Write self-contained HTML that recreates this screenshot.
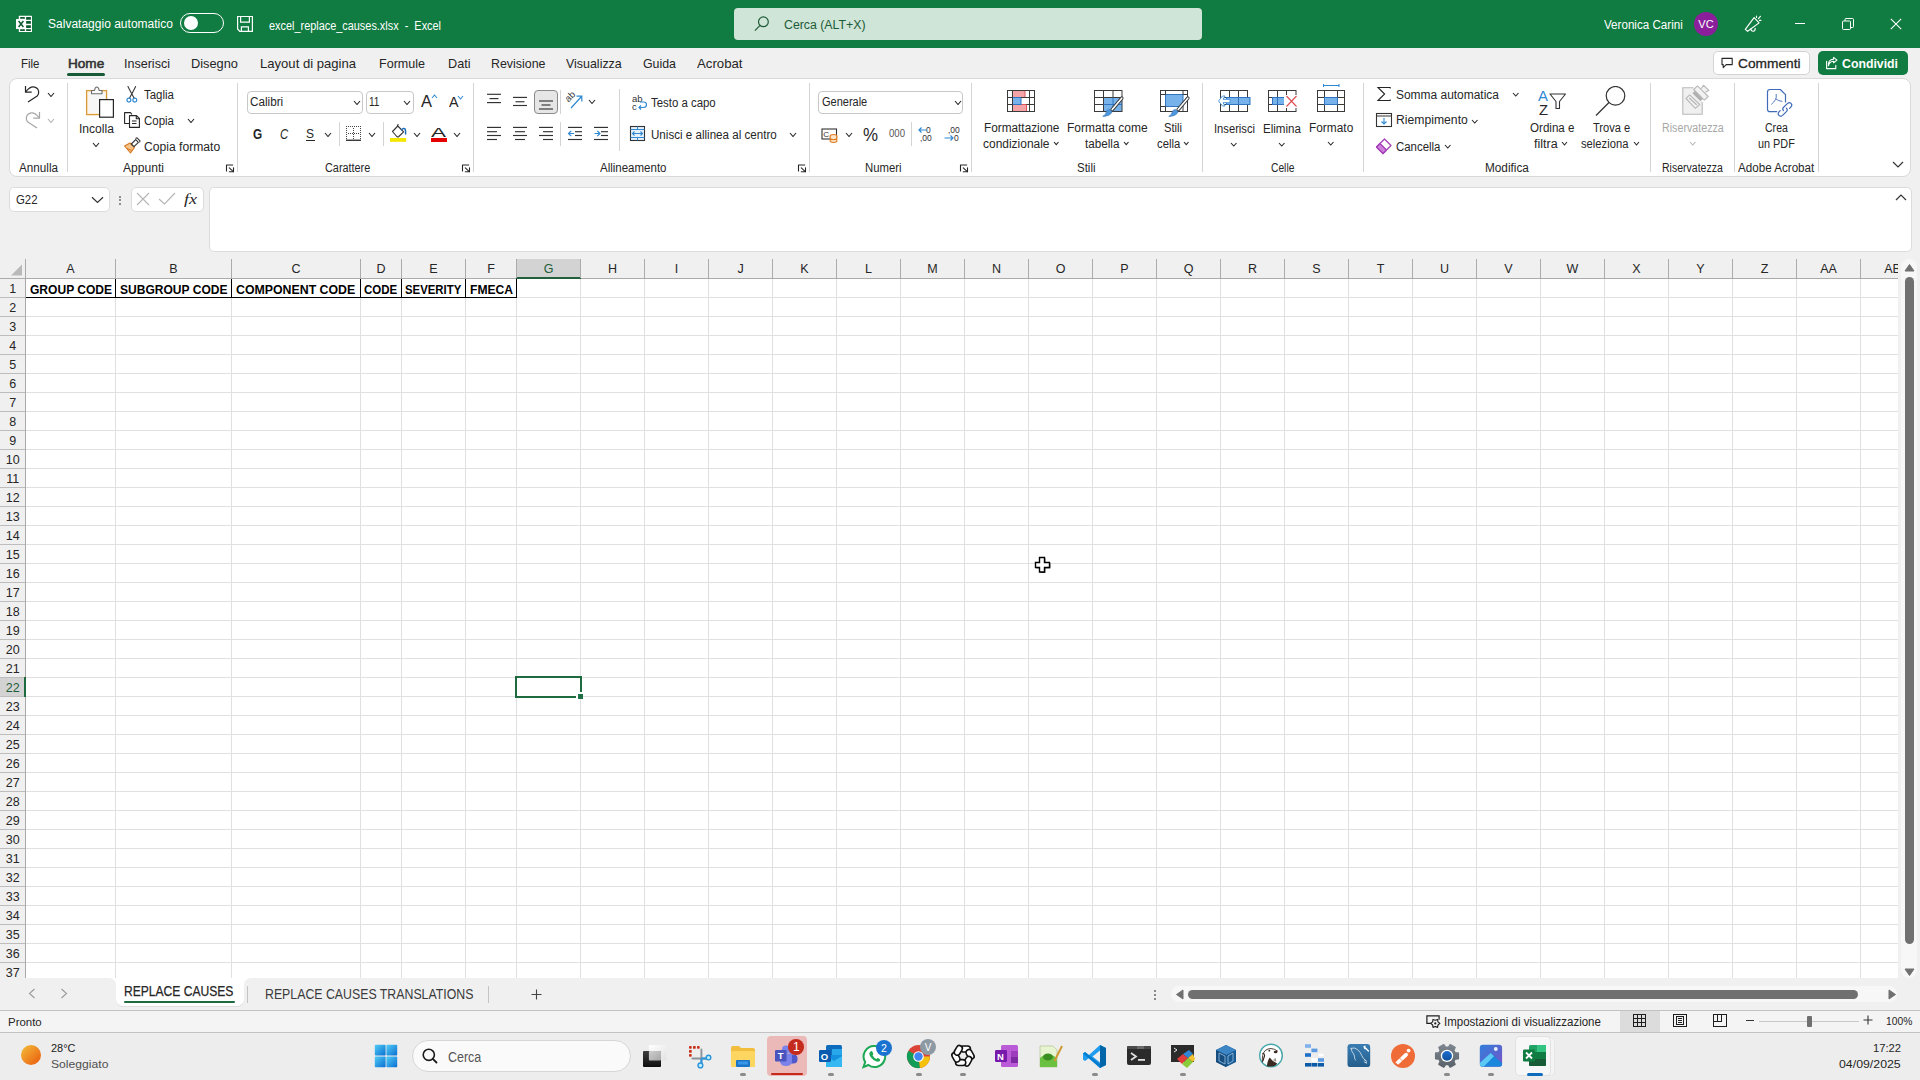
<!DOCTYPE html><html><head><meta charset="utf-8"><title>Excel</title><style>*{margin:0;padding:0}
html,body{width:1920px;height:1080px;overflow:hidden;background:#f0f0f0;font-family:"Liberation Sans",sans-serif}
.r{position:absolute;display:block}
.t{position:absolute;white-space:pre;line-height:1;transform-origin:0 0}
</style></head><body><div class="r" style="left:0px;top:0px;width:1920px;height:48px;background:#107C41;"></div><svg class="r" style="left:14px;top:14px" width="20" height="20" viewBox="14 14 20 20"><rect x="18.8" y="15.8" width="13.2" height="16.2" rx="0.6" fill="#fff"/>
      <rect x="16" y="18.9" width="9.6" height="10.1" rx="0.5" fill="#fff"/>
      <g fill="#0d5a2e"><rect x="20.1" y="17.1" width="4.8" height="1.7" rx="0.3"/><rect x="20.1" y="29.2" width="4.8" height="1.7" rx="0.3"/>
      <rect x="26.1" y="17.1" width="4.8" height="2.7" rx="0.3"/><rect x="26.1" y="21.1" width="4.8" height="2.7" rx="0.3"/><rect x="26.1" y="25.2" width="4.8" height="2.7" rx="0.3"/><rect x="26.1" y="29.2" width="4.8" height="1.7" rx="0.3"/></g>
      <path d="M18.6 21 L23.4 27 M23.4 21 L18.6 27" stroke="#0d5a2e" stroke-width="1.5"/></svg><span class="t" style="left:48.00px;top:18.02px;font-size:12.5px;color:#fff;transform:scaleX(0.9619);">Salvataggio automatico</span><div class="r" style="left:180px;top:13px;width:43.5px;height:19.5px;background:transparent;border:1.2px solid #fff;border-radius:10px;box-sizing:border-box;"></div><div class="r" style="left:184px;top:16px;width:14px;height:14px;background:#fff;border-radius:50%;"></div><svg class="r" style="left:235px;top:14px" width="20" height="20" viewBox="235 14 20 20"><g fill="none" stroke="#fff" stroke-width="1.2" stroke-linejoin="miter">
      <path d="M237.6 16.5 H252.4 V31.4 H239.8 L237.6 29 Z"/>
      <path d="M240.6 16.5 V22.2 H249.4 V16.5"/>
      <path d="M241.4 31.4 V26.8 H248.4 V31.4"/></g></svg><span class="t" style="left:269.40px;top:19.70px;font-size:12px;color:#fff;transform:scaleX(0.9081);">excel_replace_causes.xlsx  -  Excel</span><div class="r" style="left:734px;top:8px;width:468px;height:32px;background:#cfe5d7;border-radius:4px;"></div><svg class="r" style="left:754px;top:16px;" width="16" height="16" viewBox="0 0 16 16"><g fill="none" stroke="#1e5b37" stroke-width="1.2"><circle cx="9.4" cy="5.8" r="4.9"/><line x1="5.8" y1="9.6" x2="0.9" y2="14.6"/></g></svg><span class="t" style="left:783.75px;top:19.30px;font-size:12px;color:#1e5b37;transform:scaleX(1.0258);">Cerca (ALT+X)</span><span class="t" style="left:1604.00px;top:19.17px;font-size:12.5px;color:#fff;transform:scaleX(0.9298);">Veronica Carini</span><div class="r" style="left:1694px;top:11.5px;width:24px;height:24px;background:#8a1e9b;border-radius:50%;"></div><span class="t" style="left:1698.35px;top:19.15px;font-size:11px;color:#fff;">VC</span><svg class="r" style="left:1742px;top:13px" width="22" height="22" viewBox="1742 13 22 22"><g fill="none" stroke="#fff" stroke-width="1.15" stroke-linejoin="round" stroke-linecap="round">
      <path d="M1745.3 29.4 L1754.1 17.6 L1759.1 22.9 L1747.6 31.3 Z"/>
      <path d="M1750.9 28.8 Q1750.9 31.3 1753.3 31.2 Q1755.3 31 1755.2 28.3"/>
      <path d="M1756.5 16.1 V17.4 M1758.4 18.6 L1760.4 16.3 M1759.5 20.4 H1760.9"/></g></svg><div class="r" style="left:1795px;top:23px;width:10px;height:1px;background:#fff;"></div><svg class="r" style="left:1842px;top:18px;" width="12" height="12" viewBox="0 0 12 12"><g fill="none" stroke="#fff" stroke-width="1"><rect x="0.5" y="3" width="8" height="8.5" rx="1"/><path d="M3 3 V1.5 Q3 0.5 4 0.5 H10.5 Q11.5 0.5 11.5 1.5 V8.5 Q11.5 9.5 10.5 9.5 H8.5"/></g></svg><svg class="r" style="left:1890px;top:18px;" width="12" height="12" viewBox="0 0 12 12"><path d="M0.8 0.8 L11.2 11.2 M11.2 0.8 L0.8 11.2" stroke="#fff" stroke-width="1.1"/></svg><div class="r" style="left:0px;top:48px;width:1920px;height:211px;background:#f0f0f0;"></div><span class="t" style="left:21.00px;top:57.15px;font-size:13px;color:#262626;transform:scaleX(0.8831);">File</span><span class="t" style="left:67.50px;top:57.15px;font-size:13px;color:#333;transform:scaleX(1.0447);-webkit-text-stroke:0.55px #333;">Home</span><span class="t" style="left:124.00px;top:57.15px;font-size:13px;color:#262626;transform:scaleX(0.9644);">Inserisci</span><span class="t" style="left:190.50px;top:57.15px;font-size:13px;color:#262626;transform:scaleX(0.9853);">Disegno</span><span class="t" style="left:260.00px;top:57.15px;font-size:13px;color:#262626;transform:scaleX(1.0058);">Layout di pagina</span><span class="t" style="left:379.00px;top:57.15px;font-size:13px;color:#262626;transform:scaleX(0.9644);">Formule</span><span class="t" style="left:447.50px;top:57.15px;font-size:13px;color:#262626;transform:scaleX(0.9740);">Dati</span><span class="t" style="left:491.00px;top:57.15px;font-size:13px;color:#262626;transform:scaleX(0.9545);">Revisione</span><span class="t" style="left:566.00px;top:57.15px;font-size:13px;color:#262626;transform:scaleX(0.9563);">Visualizza</span><span class="t" style="left:642.50px;top:57.15px;font-size:13px;color:#262626;transform:scaleX(0.9510);">Guida</span><span class="t" style="left:697.00px;top:57.15px;font-size:13px;color:#262626;transform:scaleX(1.0156);">Acrobat</span><div class="r" style="left:67px;top:73px;width:38px;height:2.5px;background:#185c37;border-radius:1.5px;"></div><div class="r" style="left:1713px;top:51px;width:97px;height:24px;background:#fff;border:1px solid #d4d4d4;border-radius:5px;box-sizing:border-box;"></div><svg class="r" style="left:1719px;top:55px" width="16" height="15" viewBox="1719 55 16 15"><path d="M1722 58.4 H1732.2 V64.6 H1726.2 L1723.2 67.6 V64.6 H1722 Z" fill="none" stroke="#262626" stroke-width="1.1" stroke-linejoin="round"/></svg><span class="t" style="left:1737.50px;top:57.42px;font-size:13.5px;color:#262626;transform:scaleX(1.0163);-webkit-text-stroke:0.3px #262626;">Commenti</span><div class="r" style="left:1818px;top:51px;width:90px;height:24px;background:#107C41;border-radius:5px;"></div><svg class="r" style="left:1824px;top:55px" width="16" height="16" viewBox="1824 55 16 16"><g fill="none" stroke="#fff" stroke-width="1.1" stroke-linejoin="round" stroke-linecap="round">
      <path d="M1826.6 61.2 V68.6 H1835.8 V65.4"/>
      <path d="M1828.4 65.8 Q1829.2 61.4 1833.6 61.2 V62.8 L1837 60.1 L1833.6 57.4 V59.1 Q1827.8 59.6 1828.4 65.8 Z"/></g></svg><span class="t" style="left:1842.00px;top:57.42px;font-size:13.5px;color:#fff;font-weight:bold;transform:scaleX(0.9106);">Condividi</span><div class="r" style="left:9px;top:78px;width:1902px;height:99px;background:#ffffff;border:1px solid #d9d9d9;border-radius:8px;box-sizing:border-box;"></div><div class="r" style="left:67px;top:83px;width:1px;height:89px;background:#d4d4d4;"></div><div class="r" style="left:237px;top:83px;width:1px;height:89px;background:#d4d4d4;"></div><div class="r" style="left:473px;top:83px;width:1px;height:89px;background:#d4d4d4;"></div><div class="r" style="left:971px;top:83px;width:1px;height:89px;background:#d4d4d4;"></div><div class="r" style="left:1202px;top:83px;width:1px;height:89px;background:#d4d4d4;"></div><div class="r" style="left:1363px;top:83px;width:1px;height:89px;background:#d4d4d4;"></div><div class="r" style="left:1650px;top:83px;width:1px;height:89px;background:#d4d4d4;"></div><div class="r" style="left:1734px;top:83px;width:1px;height:89px;background:#d4d4d4;"></div><div class="r" style="left:1818px;top:83px;width:1px;height:89px;background:#d4d4d4;"></div><svg class="r" style="left:24px;top:84px;" width="18" height="20" viewBox="0 0 18 20"><g fill="none" stroke="#262626" stroke-width="1.2" stroke-linejoin="round"><path d="M1.5 2 V8.2 H7.7"/><path d="M1.8 7.8 C5 3.5 9 2.2 12 3.6 C15.2 5.2 15.5 9.5 13.2 12 L4 18"/></g></svg><svg class="r" style="left:46.5px;top:91.5px;" width="8" height="5.5" viewBox="0 0 8 5.5"><path d="M1 1 L4.0 4.5 L7 1" fill="none" stroke="#262626" stroke-width="1.1"/></svg><svg class="r" style="left:24px;top:110px;" width="18" height="20" viewBox="0 0 18 20"><g fill="none" stroke="#a6a6a6" stroke-width="1.2" stroke-linejoin="round"><path d="M15.5 2 V8.2 H9.3"/><path d="M15.2 7.8 C12 3.5 8 2.2 5 3.6 C1.8 5.2 1.5 9.5 3.8 12 L13 18"/></g></svg><svg class="r" style="left:46.5px;top:117.5px;" width="8" height="5.5" viewBox="0 0 8 5.5"><path d="M1 1 L4.0 4.5 L7 1" fill="none" stroke="#b0b0b0" stroke-width="1.1"/></svg><span class="t" style="left:19.00px;top:162.10px;font-size:12px;color:#262626;transform:scaleX(0.9738);">Annulla</span><svg class="r" style="left:85px;top:86px;" width="30" height="32" viewBox="0 0 30 32">
      <rect x="1.6" y="4.6" width="20" height="24" fill="#fdf3e0" stroke="#d99a3a" stroke-width="1.3"/>
      <rect x="3.4" y="6.4" width="16.4" height="20.4" fill="#f7f7f7" stroke="none"/>
      <path d="M6.5 7.8 V4.5 H9.5 Q10 1 11.8 1 Q13.6 1 14.2 4.5 H17 V7.8 Z" fill="#fafafa" stroke="#6e6e6e" stroke-width="1.1" stroke-linejoin="round"/>
      <rect x="14.6" y="13.6" width="13.8" height="17.6" fill="#fff" stroke="#262626" stroke-width="1.2"/>
    </svg><span class="t" style="left:79.00px;top:123.28px;font-size:12.5px;color:#262626;transform:scaleX(0.9669);">Incolla</span><svg class="r" style="left:92px;top:141.5px;" width="8" height="5.5" viewBox="0 0 8 5.5"><path d="M1 1 L4.0 4.5 L7 1" fill="none" stroke="#262626" stroke-width="1.1"/></svg><svg class="r" style="left:125px;top:84px" width="14" height="19" viewBox="125 84 14 19"><g fill="none" stroke-linecap="round">
      <path d="M128 86.6 Q130 91 134.2 98.2 M135.6 86.6 Q133.6 91 129.4 98.2" stroke="#3a3a3a" stroke-width="1.1"/>
      <circle cx="128.9" cy="100.1" r="1.95" stroke="#2f8ad3" stroke-width="1.15"/><circle cx="134.8" cy="100.1" r="1.95" stroke="#2f8ad3" stroke-width="1.15"/></g></svg><span class="t" style="left:144.40px;top:88.88px;font-size:12.5px;color:#262626;transform:scaleX(0.9174);">Taglia</span><svg class="r" style="left:123px;top:111px;" width="19" height="18" viewBox="0 0 19 18"><g fill="none" stroke="#262626" stroke-width="1.1" stroke-linejoin="round">
      <path d="M6 12.5 H1.6 V1.6 H7.5 L9 3.5"/>
      <path d="M6.5 4.6 H13.5 L16.4 7.5 V16.4 H6.5 Z"/>
      <path d="M13.3 4.6 V7.7 H16.4"/>
      <path d="M9 10 H13.5 M9 12.5 H13.5"/></g></svg><span class="t" style="left:144.40px;top:115.28px;font-size:12.5px;color:#262626;transform:scaleX(0.9174);">Copia</span><svg class="r" style="left:186.5px;top:117.5px;" width="8" height="5.5" viewBox="0 0 8 5.5"><path d="M1 1 L4.0 4.5 L7 1" fill="none" stroke="#262626" stroke-width="1.1"/></svg><svg class="r" style="left:123px;top:137px;" width="18" height="18" viewBox="0 0 18 18"><g stroke-linejoin="round">
      <path d="M1.5 9 L7.5 15.8 L11.5 10.5 L7 6 Z" fill="#f3c48a" stroke="#d97a22" stroke-width="1.1"/>
      <path d="M4 11.6 L9.3 13.5" stroke="#d97a22" stroke-width="1"/>
      <path d="M8.3 7 L12.7 2.6 L15.4 5.3 L11 9.7 Z" fill="#fff" stroke="#333" stroke-width="1.1"/>
      <path d="M12.5 1.5 L14 0.8 L17 3.8 L16.5 5.4" fill="none" stroke="#333" stroke-width="1.1"/></g></svg><span class="t" style="left:144.40px;top:140.94px;font-size:12.3px;color:#262626;transform:scaleX(0.9864);">Copia formato</span><span class="t" style="left:123.00px;top:162.10px;font-size:12px;color:#262626;transform:scaleX(1.0074);">Appunti</span><svg class="r" style="left:225px;top:163.5px;" width="11" height="10" viewBox="0 0 11 10"><g fill="none" stroke="#262626" stroke-width="1.1" stroke-linecap="round" stroke-linejoin="round"><path d="M1.5 6.9 V1 H7.7"/><path d="M4.3 3.9 L8.3 7.7"/><path d="M8.5 3.8 V7.8 H4.3"/></g></svg><div class="r" style="left:246.5px;top:90.5px;width:116px;height:23px;background:#fff;border:1px solid #c8c8c8;border-radius:4px;box-sizing:border-box;"></div><span class="t" style="left:249.75px;top:96.28px;font-size:12.5px;color:#262626;transform:scaleX(0.9365);">Calibri</span><svg class="r" style="left:352.5px;top:99.5px;" width="8" height="5.5" viewBox="0 0 8 5.5"><path d="M1 1 L4.0 4.5 L7 1" fill="none" stroke="#262626" stroke-width="1.1"/></svg><div class="r" style="left:365.5px;top:90.5px;width:48px;height:23px;background:#fff;border:1px solid #c8c8c8;border-radius:4px;box-sizing:border-box;"></div><span class="t" style="left:368.50px;top:96.28px;font-size:12.5px;color:#262626;transform:scaleX(0.8077);">11</span><svg class="r" style="left:403px;top:99.5px;" width="8" height="5.5" viewBox="0 0 8 5.5"><path d="M1 1 L4.0 4.5 L7 1" fill="none" stroke="#262626" stroke-width="1.1"/></svg><span class="t" style="left:421.00px;top:93.25px;font-size:17px;color:#262626;transform:scaleX(0.9692);">A</span><svg class="r" style="left:431px;top:94px;" width="7" height="5" viewBox="0 0 7 5"><path d="M1 4 L3.5 1 L6 4" fill="none" stroke="#2f8ad3" stroke-width="1.1"/></svg><span class="t" style="left:448.50px;top:95.38px;font-size:14.5px;color:#262626;transform:scaleX(0.9845);">A</span><svg class="r" style="left:457px;top:94.5px;" width="7" height="5" viewBox="0 0 7 5"><path d="M1 1 L3.5 4 L6 1" fill="none" stroke="#2f8ad3" stroke-width="1.1"/></svg><span class="t" style="left:253.00px;top:127.00px;font-size:14px;color:#262626;font-weight:bold;transform:scaleX(0.8440);">G</span><span class="t" style="left:280.00px;top:127.00px;font-size:14px;color:#262626;transform:scaleX(0.8119);font-style:italic;">C</span><span class="t" style="left:306.00px;top:127.43px;font-size:13.5px;color:#262626;transform:scaleX(0.8889);">S</span><div class="r" style="left:306px;top:139.5px;width:8.5px;height:1.2px;background:#262626;"></div><svg class="r" style="left:324px;top:131.5px;" width="8" height="5.5" viewBox="0 0 8 5.5"><path d="M1 1 L4.0 4.5 L7 1" fill="none" stroke="#262626" stroke-width="1.1"/></svg><div class="r" style="left:339px;top:122px;width:1px;height:24px;background:#d4d4d4;"></div><svg class="r" style="left:344px;top:124px" width="20" height="20" viewBox="344 124 20 20"><rect x="346" y="126" width="1" height="1" fill="#444"/><rect x="348" y="126" width="1" height="1" fill="#444"/><rect x="350" y="126" width="1" height="1" fill="#444"/><rect x="352" y="126" width="1" height="1" fill="#444"/><rect x="354" y="126" width="1" height="1" fill="#444"/><rect x="356" y="126" width="1" height="1" fill="#444"/><rect x="358" y="126" width="1" height="1" fill="#444"/><rect x="360" y="126" width="1" height="1" fill="#444"/><rect x="346" y="128" width="1" height="1" fill="#444"/><rect x="346" y="130" width="1" height="1" fill="#444"/><rect x="346" y="132" width="1" height="1" fill="#444"/><rect x="346" y="134" width="1" height="1" fill="#444"/><rect x="346" y="136" width="1" height="1" fill="#444"/><rect x="346" y="138" width="1" height="1" fill="#444"/><rect x="360" y="128" width="1" height="1" fill="#444"/><rect x="360" y="130" width="1" height="1" fill="#444"/><rect x="360" y="132" width="1" height="1" fill="#444"/><rect x="360" y="134" width="1" height="1" fill="#444"/><rect x="360" y="136" width="1" height="1" fill="#444"/><rect x="360" y="138" width="1" height="1" fill="#444"/><rect x="348" y="133" width="1" height="1" fill="#444"/><rect x="350" y="133" width="1" height="1" fill="#444"/><rect x="352" y="133" width="1" height="1" fill="#444"/><rect x="354" y="133" width="1" height="1" fill="#444"/><rect x="356" y="133" width="1" height="1" fill="#444"/><rect x="358" y="133" width="1" height="1" fill="#444"/><rect x="353" y="128" width="1" height="1" fill="#444"/><rect x="353" y="130" width="1" height="1" fill="#444"/><rect x="353" y="132" width="1" height="1" fill="#444"/><rect x="353" y="134" width="1" height="1" fill="#444"/><rect x="353" y="136" width="1" height="1" fill="#444"/><rect x="353" y="138" width="1" height="1" fill="#444"/><rect x="346" y="139.6" width="15" height="1.3" fill="#262626"/></svg><svg class="r" style="left:368px;top:131.5px;" width="8" height="5.5" viewBox="0 0 8 5.5"><path d="M1 1 L4.0 4.5 L7 1" fill="none" stroke="#262626" stroke-width="1.1"/></svg><div class="r" style="left:383px;top:122px;width:1px;height:24px;background:#d4d4d4;"></div><svg class="r" style="left:388px;top:124px" width="20" height="20" viewBox="388 124 20 20"><path d="M392.5 131.5 L397.8 126 L403.6 131.8 L398.8 136.5 Q397.8 137.4 396.8 136.5 Z" fill="#fff" stroke="#333" stroke-width="1.1" stroke-linejoin="round"/>
      <path d="M397.8 126 Q397 124.6 398.6 124.6" fill="none" stroke="#333" stroke-width="1.1"/>
      <path d="M401.5 129.8 Q403.8 127.4 405.2 129.2 Q405.8 131 405.6 134" fill="none" stroke="#1f6fb8" stroke-width="1.5" stroke-linecap="round"/>
      <rect x="390" y="138" width="16.2" height="3.8" fill="#f5e600"/></svg><svg class="r" style="left:412.5px;top:131.5px;" width="8" height="5.5" viewBox="0 0 8 5.5"><path d="M1 1 L4.0 4.5 L7 1" fill="none" stroke="#262626" stroke-width="1.1"/></svg><span class="t" style="left:431.00px;top:126.23px;font-size:13.5px;color:#262626;transform:scaleX(1.6667);">A</span><div class="r" style="left:431px;top:138px;width:16px;height:3.8px;background:#e40000;"></div><svg class="r" style="left:453px;top:131.5px;" width="8" height="5.5" viewBox="0 0 8 5.5"><path d="M1 1 L4.0 4.5 L7 1" fill="none" stroke="#262626" stroke-width="1.1"/></svg><span class="t" style="left:324.75px;top:162.10px;font-size:12px;color:#262626;transform:scaleX(0.9050);">Carattere</span><svg class="r" style="left:461px;top:163.5px;" width="11" height="10" viewBox="0 0 11 10"><g fill="none" stroke="#262626" stroke-width="1.1" stroke-linecap="round" stroke-linejoin="round"><path d="M1.5 6.9 V1 H7.7"/><path d="M4.3 3.9 L8.3 7.7"/><path d="M8.5 3.8 V7.8 H4.3"/></g></svg><svg class="r" style="left:486px;top:92px;" width="16" height="14" viewBox="0 0 16 14"><line x1="1" y1="2.3" x2="15" y2="2.3" stroke="#333" stroke-width="1.15"/><line x1="3.5" y1="6.6" x2="12.5" y2="6.6" stroke="#333" stroke-width="1.15"/><line x1="1" y1="10.6" x2="15" y2="10.6" stroke="#333" stroke-width="1.15"/></svg><svg class="r" style="left:512px;top:95px;" width="16" height="14" viewBox="0 0 16 14"><line x1="1" y1="2.4" x2="15" y2="2.4" stroke="#333" stroke-width="1.15"/><line x1="3.5" y1="6.75" x2="12.5" y2="6.75" stroke="#333" stroke-width="1.15"/><line x1="1" y1="10.5" x2="15" y2="10.5" stroke="#333" stroke-width="1.15"/></svg><div class="r" style="left:534px;top:90px;width:23.5px;height:23.5px;background:#e6e6e6;border:1px solid #8a8a8a;border-radius:4px;box-sizing:border-box;"></div><svg class="r" style="left:538px;top:99px;" width="16" height="14" viewBox="0 0 16 14"><line x1="1" y1="2" x2="15" y2="2" stroke="#333" stroke-width="1.15"/><line x1="3.5" y1="6" x2="12.5" y2="6" stroke="#333" stroke-width="1.15"/><line x1="1" y1="10" x2="15" y2="10" stroke="#333" stroke-width="1.15"/></svg><div class="r" style="left:560px;top:90px;width:1px;height:24px;background:#d4d4d4;"></div><svg class="r" style="left:566px;top:92px;" width="20" height="18" viewBox="0 0 20 18"><text x="0" y="0" font-family="Liberation Sans" font-size="9.5" fill="#333" transform="translate(2.5,10.5) rotate(-45)">ab</text>
      <path d="M5 16 L15.5 4.5 M10.5 4.2 H15.8 V9.5" fill="none" stroke="#2f8ad3" stroke-width="1.2"/></svg><svg class="r" style="left:588px;top:99px;" width="8" height="5.5" viewBox="0 0 8 5.5"><path d="M1 1 L4.0 4.5 L7 1" fill="none" stroke="#262626" stroke-width="1.1"/></svg><svg class="r" style="left:486px;top:125px;" width="16" height="16" viewBox="0 0 16 16"><line x1="1" y1="2.4" x2="15" y2="2.4" stroke="#333" stroke-width="1.15"/><line x1="1" y1="6.7" x2="11" y2="6.7" stroke="#333" stroke-width="1.15"/><line x1="1" y1="10.5" x2="15" y2="10.5" stroke="#333" stroke-width="1.15"/><line x1="1" y1="14.5" x2="11" y2="14.5" stroke="#333" stroke-width="1.15"/></svg><svg class="r" style="left:512px;top:125px;" width="16" height="16" viewBox="0 0 16 16"><line x1="1" y1="2.4" x2="15" y2="2.4" stroke="#333" stroke-width="1.15"/><line x1="3" y1="6.7" x2="13" y2="6.7" stroke="#333" stroke-width="1.15"/><line x1="1" y1="10.5" x2="15" y2="10.5" stroke="#333" stroke-width="1.15"/><line x1="3" y1="14.5" x2="13" y2="14.5" stroke="#333" stroke-width="1.15"/></svg><svg class="r" style="left:538px;top:125px;" width="16" height="16" viewBox="0 0 16 16"><line x1="1" y1="2.4" x2="15" y2="2.4" stroke="#333" stroke-width="1.15"/><line x1="5" y1="6.7" x2="15" y2="6.7" stroke="#333" stroke-width="1.15"/><line x1="1" y1="10.5" x2="15" y2="10.5" stroke="#333" stroke-width="1.15"/><line x1="5" y1="14.5" x2="15" y2="14.5" stroke="#333" stroke-width="1.15"/></svg><div class="r" style="left:560px;top:122px;width:1px;height:24px;background:#d4d4d4;"></div><svg class="r" style="left:567px;top:125px;" width="16" height="16" viewBox="0 0 16 16"><line x1="1" y1="2.4" x2="15" y2="2.4" stroke="#333" stroke-width="1.15"/><line x1="8" y1="6.7" x2="15" y2="6.7" stroke="#333" stroke-width="1.15"/><line x1="8" y1="10.5" x2="15" y2="10.5" stroke="#333" stroke-width="1.15"/><line x1="1" y1="14.5" x2="15" y2="14.5" stroke="#333" stroke-width="1.15"/><path d="M7 8.5 H1.5 M4.2 5.8 L1.5 8.5 L4.2 11.2" fill="none" stroke="#2f8ad3" stroke-width="1.2"/></svg><svg class="r" style="left:593px;top:125px;" width="16" height="16" viewBox="0 0 16 16"><line x1="1" y1="2.4" x2="15" y2="2.4" stroke="#333" stroke-width="1.15"/><line x1="8" y1="6.7" x2="15" y2="6.7" stroke="#333" stroke-width="1.15"/><line x1="8" y1="10.5" x2="15" y2="10.5" stroke="#333" stroke-width="1.15"/><line x1="1" y1="14.5" x2="15" y2="14.5" stroke="#333" stroke-width="1.15"/><path d="M1.5 8.5 H7 M4.3 5.8 L7 8.5 L4.3 11.2" fill="none" stroke="#2f8ad3" stroke-width="1.2"/></svg><div class="r" style="left:619px;top:89px;width:1px;height:62px;background:#d4d4d4;"></div><svg class="r" style="left:631px;top:94px;" width="17" height="18" viewBox="0 0 17 18"><text x="1" y="8" font-family="Liberation Sans" font-size="9.5" fill="#333">ab</text>
      <text x="1" y="16" font-family="Liberation Sans" font-size="9.5" fill="#333">c</text>
      <path d="M8 13.5 H12.5 Q15.5 13.5 15.5 10.5 Q15.5 8 12.5 8 H9 M10 11.5 L8 13.5 L10 15.5" fill="none" stroke="#2f8ad3" stroke-width="1.2"/></svg><span class="t" style="left:650.75px;top:97.28px;font-size:12.5px;color:#262626;transform:scaleX(0.9126);">Testo a capo</span><svg class="r" style="left:629px;top:125px;" width="17" height="17" viewBox="0 0 17 17"><rect x="1.5" y="1.5" width="14" height="14" fill="#e6f1fb" stroke="#333" stroke-width="1.1"/>
      <path d="M1.5 4.5 H15.5 M1.5 12.5 H15.5 M8.5 1.5 V4.5 M8.5 12.5 V15.5" stroke="#2f8ad3" stroke-width="1"/>
      <path d="M3.5 8.5 H13.5 M5.5 6.5 L3.5 8.5 L5.5 10.5 M11.5 6.5 L13.5 8.5 L11.5 10.5" fill="none" stroke="#2f8ad3" stroke-width="1.1"/></svg><span class="t" style="left:650.75px;top:129.28px;font-size:12.5px;color:#262626;transform:scaleX(0.9277);">Unisci e allinea al centro</span><svg class="r" style="left:788.7px;top:131.5px;" width="8" height="5.5" viewBox="0 0 8 5.5"><path d="M1 1 L4.0 4.5 L7 1" fill="none" stroke="#262626" stroke-width="1.1"/></svg><span class="t" style="left:599.50px;top:162.10px;font-size:12px;color:#262626;transform:scaleX(0.9582);">Allineamento</span><svg class="r" style="left:797px;top:163.5px;" width="11" height="10" viewBox="0 0 11 10"><g fill="none" stroke="#262626" stroke-width="1.1" stroke-linecap="round" stroke-linejoin="round"><path d="M1.5 6.9 V1 H7.7"/><path d="M4.3 3.9 L8.3 7.7"/><path d="M8.5 3.8 V7.8 H4.3"/></g></svg><div class="r" style="left:809px;top:83px;width:1px;height:89px;background:#d4d4d4;"></div><div class="r" style="left:818px;top:90.5px;width:145px;height:23px;background:#fff;border:1px solid #c8c8c8;border-radius:4px;box-sizing:border-box;"></div><span class="t" style="left:821.80px;top:95.98px;font-size:12.5px;color:#262626;transform:scaleX(0.8794);">Generale</span><svg class="r" style="left:953.5px;top:99.5px;" width="8" height="5.5" viewBox="0 0 8 5.5"><path d="M1 1 L4.0 4.5 L7 1" fill="none" stroke="#262626" stroke-width="1.1"/></svg><svg class="r" style="left:821px;top:128px;" width="19" height="16" viewBox="0 0 19 16"><rect x="1" y="1" width="14.5" height="10" fill="#fff" stroke="#333" stroke-width="1.1"/>
      <text x="2.2" y="9" font-family="Liberation Sans" font-size="8" fill="#333">C</text>
      <ellipse cx="12.5" cy="8" rx="3.3" ry="1.4" fill="#fff" stroke="#e07a1c" stroke-width="1.1"/>
      <path d="M9.2 8 V13.5 Q12.5 15.5 15.8 13.5 V8 M9.2 10.8 Q12.5 12.6 15.8 10.8" fill="#fde5c9" stroke="#e07a1c" stroke-width="1.1"/></svg><svg class="r" style="left:844.5px;top:131.5px;" width="8" height="5.5" viewBox="0 0 8 5.5"><path d="M1 1 L4.0 4.5 L7 1" fill="none" stroke="#262626" stroke-width="1.1"/></svg><span class="t" style="left:863.30px;top:126.30px;font-size:18px;color:#262626;transform:scaleX(0.9375);">%</span><span class="t" style="left:889.00px;top:129.40px;font-size:10px;color:#555;transform:scaleX(0.9581);">000</span><div class="r" style="left:911px;top:122px;width:1px;height:24px;background:#d4d4d4;"></div><svg class="r" style="left:917px;top:125px;" width="18" height="18" viewBox="0 0 18 18"><text x="9" y="8" font-family="Liberation Sans" font-size="8.5" fill="#333">0</text>
      <text x="3" y="16" font-family="Liberation Sans" font-size="8.5" fill="#333">,00</text>
      <path d="M10 5 H2 M4.5 2.5 L2 5 L4.5 7.5" fill="none" stroke="#2f8ad3" stroke-width="1.2"/></svg><svg class="r" style="left:943px;top:125px;" width="18" height="18" viewBox="0 0 18 18"><text x="5" y="8" font-family="Liberation Sans" font-size="8.5" fill="#333">,00</text>
      <text x="11" y="16" font-family="Liberation Sans" font-size="8.5" fill="#333">0</text>
      <path d="M1.5 13 H10 M7.5 10.5 L10 13 L7.5 15.5" fill="none" stroke="#2f8ad3" stroke-width="1.2"/></svg><span class="t" style="left:864.50px;top:162.10px;font-size:12px;color:#262626;transform:scaleX(0.9444);">Numeri</span><svg class="r" style="left:959px;top:163.5px;" width="11" height="10" viewBox="0 0 11 10"><g fill="none" stroke="#262626" stroke-width="1.1" stroke-linecap="round" stroke-linejoin="round"><path d="M1.5 6.9 V1 H7.7"/><path d="M4.3 3.9 L8.3 7.7"/><path d="M8.5 3.8 V7.8 H4.3"/></g></svg><svg class="r" style="left:1004px;top:86px" width="34" height="30" viewBox="1004 86 34 30">
      <rect x="1012.5" y="90.5" width="12.5" height="7" fill="#f4a3a6" stroke="#e0565c" stroke-width="1"/>
      <rect x="1012.5" y="104.5" width="14" height="7" fill="#f4a3a6" stroke="#e0565c" stroke-width="1"/>
      <rect x="1012.5" y="97.5" width="8.5" height="7" fill="#77b3ea" stroke="#2f74c0" stroke-width="1"/>
      <g fill="none" stroke="#3a3a3a" stroke-width="1">
        <rect x="1007.5" y="90.5" width="27" height="21"/>
        <path d="M1012.5 90.5 V111.5 M1029.5 90.5 V111.5 M1007.5 97.5 H1012.5 M1007.5 104.5 H1012.5 M1026.5 104.5 H1034.5 M1025 97.5 H1034.5 M1021 97.5 H1025"/>
      </g></svg><span class="t" style="left:983.60px;top:122.28px;font-size:12.5px;color:#262626;transform:scaleX(0.9437);">Formattazione</span><span class="t" style="left:982.75px;top:137.78px;font-size:12.5px;color:#262626;transform:scaleX(0.9568);">condizionale</span><svg class="r" style="left:1052.6px;top:141.2px;" width="6.5" height="4.6" viewBox="0 0 6.5 4.6"><path d="M1 1 L3.25 3.6 L5.5 1" fill="none" stroke="#262626" stroke-width="1.1"/></svg><svg class="r" style="left:1092px;top:86px" width="34" height="33" viewBox="1092 86 34 33">
      <rect x="1103.5" y="97.5" width="18.5" height="14" fill="#77b3ea"/>
      <g fill="none" stroke="#3a3a3a" stroke-width="1">
        <rect x="1094.5" y="90.5" width="27.5" height="21"/>
        <path d="M1094.5 97.5 H1122 M1094.5 104.5 H1103.5 M1103.5 90.5 V111.5 M1113 90.5 V97.5"/>
      </g>
      <path d="M1103.5 104.5 H1122 M1113 97.5 V111.5" stroke="#2f74c0" stroke-width="1"/><path d="M1121.8 98.2 L1112.2 109.6" stroke="#3a3a3a" stroke-width="3.6" stroke-linecap="round"/>
      <path d="M1121.8 98.2 L1112.2 109.6" stroke="#fff" stroke-width="1.6" stroke-linecap="round"/>
      <path d="M1109.6 109.4 q1.6 1.2 2.4 2.6 q-1.8 4.2 -9.2 4.4 q3.6 -2 3.4 -4.4 q0.8 -2.6 3.4 -2.6 z" fill="#4f95da" stroke="#3479c2" stroke-width="0.7"/></svg><span class="t" style="left:1067.40px;top:122.28px;font-size:12.5px;color:#262626;transform:scaleX(0.9590);">Formatta come</span><span class="t" style="left:1085.00px;top:137.78px;font-size:12.5px;color:#262626;transform:scaleX(0.9350);">tabella</span><svg class="r" style="left:1123px;top:141.2px;" width="6.5" height="4.6" viewBox="0 0 6.5 4.6"><path d="M1 1 L3.25 3.6 L5.5 1" fill="none" stroke="#262626" stroke-width="1.1"/></svg><svg class="r" style="left:1158px;top:86px" width="34" height="33" viewBox="1158 86 34 33">
      <rect x="1165.5" y="94.5" width="17.5" height="12" fill="#77b3ea" stroke="#2f74c0" stroke-width="1"/>
      <g fill="none" stroke="#3a3a3a" stroke-width="1">
        <rect x="1160.5" y="90.5" width="27" height="21"/>
        <path d="M1165.5 90.5 V94.5 M1183 90.5 V94.5 M1160.5 94.5 H1165.5 M1183 94.5 H1187.5 M1160.5 106.5 H1165.5 M1165.5 106.5 V111.5 M1183 106.5 V111.5"/>
      </g><path d="M1187.8 98.2 L1178.2 109.6" stroke="#3a3a3a" stroke-width="3.6" stroke-linecap="round"/>
      <path d="M1187.8 98.2 L1178.2 109.6" stroke="#fff" stroke-width="1.6" stroke-linecap="round"/>
      <path d="M1175.6 109.4 q1.6 1.2 2.4 2.6 q-1.8 4.2 -9.2 4.4 q3.6 -2 3.4 -4.4 q0.8 -2.6 3.4 -2.6 z" fill="#4f95da" stroke="#3479c2" stroke-width="0.7"/></svg><span class="t" style="left:1164.00px;top:122.28px;font-size:12.5px;color:#262626;transform:scaleX(0.8933);">Stili</span><span class="t" style="left:1156.75px;top:137.78px;font-size:12.5px;color:#262626;transform:scaleX(0.9029);">cella</span><svg class="r" style="left:1182.6px;top:141.2px;" width="6.5" height="4.6" viewBox="0 0 6.5 4.6"><path d="M1 1 L3.25 3.6 L5.5 1" fill="none" stroke="#262626" stroke-width="1.1"/></svg><span class="t" style="left:1077.00px;top:162.10px;font-size:12px;color:#262626;transform:scaleX(0.9561);">Stili</span><svg class="r" style="left:1215px;top:86px" width="38" height="30" viewBox="1215 86 38 30">
      <g fill="none" stroke="#3a3a3a" stroke-width="1">
        <rect x="1220.5" y="90.5" width="27" height="21"/>
        <path d="M1229.5 90.5 V111.5 M1238.5 90.5 V111.5 M1220.5 97.5 H1247.5 M1220.5 104.5 H1247.5"/>
      </g>
      <rect x="1226.5" y="97.5" width="23.5" height="7" fill="#77b3ea" stroke="#2f74c0" stroke-width="1"/>
      <path d="M1238.5 97.5 V104.5" stroke="#2f74c0" stroke-width="1"/>
      <path d="M1230 99.3 H1223 L1225 96 L1222.5 96 L1218.5 101 L1222.5 106 L1225 106 L1223 102.7 H1230 Z" fill="#fff" stroke="#4f95da" stroke-width="1" stroke-linejoin="round"/></svg><span class="t" style="left:1213.50px;top:122.88px;font-size:12.5px;color:#262626;transform:scaleX(0.8942);">Inserisci</span><svg class="r" style="left:1229.6px;top:141.75px;" width="7.5" height="5" viewBox="0 0 7.5 5"><path d="M1 1 L3.75 4 L6.5 1" fill="none" stroke="#262626" stroke-width="1.1"/></svg><svg class="r" style="left:1265px;top:86px" width="36" height="30" viewBox="1265 86 36 30">
      <g fill="none" stroke="#3a3a3a" stroke-width="1">
        <rect x="1268.5" y="90.5" width="27.5" height="21"/>
        <path d="M1277.5 90.5 V111.5 M1286.5 90.5 V111.5 M1268.5 97.5 H1296 M1268.5 104.5 H1296"/>
      </g>
      <path d="M1272.5 97.5 H1284.5 L1288 101 L1284.5 104.5 H1272.5 Z" fill="#77b3ea" stroke="#2f74c0" stroke-width="1"/>
      <path d="M1277.5 97.5 V104.5" stroke="#2f74c0" stroke-width="1"/>
      <rect x="1284" y="95" width="14" height="13" fill="#fff"/>
      <path d="M1286.5 96 L1296.5 106.5 M1296.5 96 L1286.5 106.5" stroke="#e24b4f" stroke-width="1.1"/></svg><span class="t" style="left:1262.50px;top:122.88px;font-size:12.5px;color:#262626;transform:scaleX(0.9257);">Elimina</span><svg class="r" style="left:1277.75px;top:141.75px;" width="7.5" height="5" viewBox="0 0 7.5 5"><path d="M1 1 L3.75 4 L6.5 1" fill="none" stroke="#262626" stroke-width="1.1"/></svg><svg class="r" style="left:1314px;top:83px" width="34" height="31" viewBox="1314 83 34 31">
      <path d="M1323.5 85.5 H1339 M1323.5 84 V87 M1339 84 V87" stroke="#2f86d3" stroke-width="1"/>
      <rect x="1324.5" y="97.5" width="13" height="7" fill="#77b3ea"/>
      <g fill="none" stroke="#3a3a3a" stroke-width="1">
        <rect x="1317.5" y="90.5" width="27" height="21"/>
        <path d="M1324.5 90.5 V111.5 M1337.5 90.5 V111.5 M1317.5 97.5 H1344.5 M1317.5 104.5 H1344.5"/>
      </g>
      <rect x="1324.5" y="97.5" width="13" height="7" fill="none" stroke="#2f74c0" stroke-width="1"/></svg><span class="t" style="left:1308.50px;top:122.47px;font-size:12.5px;color:#262626;transform:scaleX(0.9506);">Formato</span><svg class="r" style="left:1326.5px;top:140.75px;" width="7.5" height="5" viewBox="0 0 7.5 5"><path d="M1 1 L3.75 4 L6.5 1" fill="none" stroke="#262626" stroke-width="1.1"/></svg><span class="t" style="left:1270.60px;top:162.10px;font-size:12px;color:#262626;transform:scaleX(0.8556);">Celle</span><svg class="r" style="left:1376px;top:86px" width="16" height="16" viewBox="1376 86 16 16"><path d="M1390.2 88.6 V87.5 H1378 L1384.6 94 L1378 100.5 H1390.2 V99.4" fill="none" stroke="#262626" stroke-width="1.1" stroke-linejoin="miter"/></svg><span class="t" style="left:1396.00px;top:88.88px;font-size:12.5px;color:#262626;transform:scaleX(0.9559);">Somma automatica</span><svg class="r" style="left:1511.8px;top:91.8px;" width="7.5" height="5" viewBox="0 0 7.5 5"><path d="M1 1 L3.75 4 L6.5 1" fill="none" stroke="#262626" stroke-width="1.1"/></svg><svg class="r" style="left:1375px;top:112px;" width="18" height="16" viewBox="0 0 18 16"><rect x="1.5" y="1.5" width="15" height="13" fill="#fff" stroke="#333" stroke-width="1.1"/>
      <line x1="1.5" y1="4" x2="16.5" y2="4" stroke="#333" stroke-width="1"/>
      <path d="M9 6 V12 M6.5 9.5 L9 12 L11.5 9.5" fill="none" stroke="#2f8ad3" stroke-width="1.1"/></svg><span class="t" style="left:1396.00px;top:114.28px;font-size:12.5px;color:#262626;transform:scaleX(0.9749);">Riempimento</span><svg class="r" style="left:1471px;top:118.5px;" width="7.5" height="5" viewBox="0 0 7.5 5"><path d="M1 1 L3.75 4 L6.5 1" fill="none" stroke="#262626" stroke-width="1.1"/></svg><svg class="r" style="left:1375px;top:137px;" width="18" height="18" viewBox="0 0 18 18"><path d="M1.5 10 L9.5 2 L16 8.5 L8 16.5 Z" fill="#fff" stroke="#a23bb5" stroke-width="1.2" stroke-linejoin="round"/>
      <path d="M1.5 10 L5 6.5 L11.5 13 L8 16.5 Z" fill="#cf7fdc" stroke="#a23bb5" stroke-width="1.2" stroke-linejoin="round"/></svg><span class="t" style="left:1396.00px;top:140.78px;font-size:12.5px;color:#262626;transform:scaleX(0.9138);">Cancella</span><svg class="r" style="left:1444px;top:144px;" width="7.5" height="5" viewBox="0 0 7.5 5"><path d="M1 1 L3.75 4 L6.5 1" fill="none" stroke="#262626" stroke-width="1.1"/></svg><span class="t" style="left:1537.80px;top:89.00px;font-size:14px;color:#2f8ad3;transform:scaleX(1.0695);">A</span><span class="t" style="left:1538.50px;top:102.50px;font-size:14px;color:#262626;transform:scaleX(1.0526);">Z</span><svg class="r" style="left:1549px;top:93px;" width="18" height="17" viewBox="0 0 18 17"><path d="M1 1 H16.5 L10.5 8.5 V15.5 H7 V8.5 Z" fill="#fff" stroke="#333" stroke-width="1.1" stroke-linejoin="round"/></svg><span class="t" style="left:1529.50px;top:122.28px;font-size:12.5px;color:#262626;transform:scaleX(0.9281);">Ordina e</span><span class="t" style="left:1534.00px;top:137.78px;font-size:12.5px;color:#262626;">filtra</span><svg class="r" style="left:1560.6px;top:141px;" width="7" height="5" viewBox="0 0 7 5"><path d="M1 1 L3.5 4 L6 1" fill="none" stroke="#262626" stroke-width="1.1"/></svg><svg class="r" style="left:1595px;top:86px;" width="31" height="31" viewBox="0 0 31 31"><circle cx="20.5" cy="9.8" r="9.3" fill="none" stroke="#333" stroke-width="1.2"/><line x1="14" y1="16.5" x2="1" y2="29.5" stroke="#333" stroke-width="1.2"/></svg><span class="t" style="left:1592.80px;top:122.28px;font-size:12.5px;color:#262626;transform:scaleX(0.8878);">Trova e</span><span class="t" style="left:1581.00px;top:137.78px;font-size:12.5px;color:#262626;transform:scaleX(0.8969);">seleziona</span><svg class="r" style="left:1632.5px;top:141px;" width="7" height="5" viewBox="0 0 7 5"><path d="M1 1 L3.5 4 L6 1" fill="none" stroke="#262626" stroke-width="1.1"/></svg><span class="t" style="left:1484.50px;top:162.10px;font-size:12px;color:#262626;transform:scaleX(0.9821);">Modifica</span><svg class="r" style="left:1678px;top:82px" width="34" height="36" viewBox="1678 82 34 36"><path d="M1693.3 87.8 H1682.8 V114.2 H1702.2 V102" fill="#f0f0f0" stroke="#b9b9b9" stroke-width="1.1"/>
      <path d="M1686 98.5 L1689.7 94.8 L1699.7 104.5 L1695.3 108.3 Z" fill="#f2f2f2" stroke="#b9b9b9" stroke-width="1.1" stroke-linejoin="round"/>
      <path d="M1689.6 98.2 L1696.3 104.6" stroke="#b9b9b9" stroke-width="1.4" stroke-linecap="round"/>
      <path d="M1693.7 89.5 L1697.5 85.8 L1708.2 96.5 L1704.3 100.2 Z" fill="#f2f2f2" stroke="#b9b9b9" stroke-width="1.1" stroke-linejoin="round"/>
      <path d="M1693.6 92.2 L1701.6 100.2" stroke="#b0b0b0" stroke-width="3.2"/>
      <path d="M1701 88.8 L1703.5 85.2 L1708.8 90.5 L1705.3 92.2" fill="#f2f2f2" stroke="#b9b9b9" stroke-width="1.1" stroke-linejoin="round"/></svg><span class="t" style="left:1661.60px;top:122.28px;font-size:12.5px;color:#a8a8a8;transform:scaleX(0.8548);">Riservatezza</span><svg class="r" style="left:1688.6px;top:140.5px;" width="7.5" height="5" viewBox="0 0 7.5 5"><path d="M1 1 L3.75 4 L6.5 1" fill="none" stroke="#b5b5b5" stroke-width="1.1"/></svg><span class="t" style="left:1661.60px;top:162.10px;font-size:12px;color:#262626;transform:scaleX(0.8761);">Riservatezza</span><svg class="r" style="left:1764px;top:86px" width="32" height="33" viewBox="1764 86 32 33"><g fill="none" stroke="#3f6bb8" stroke-width="1.2" stroke-linecap="round" stroke-linejoin="round">
      <path d="M1776.7 111.7 H1770 Q1767.5 111.7 1767.5 109.2 V91.9 Q1767.5 89.5 1770 89.5 H1780.3 L1785.5 94.7 V101.8"/>
      <path d="M1776.2 94.4 Q1776.6 97.8 1775.6 99.4 Q1773.8 102.4 1771.6 104.2 M1776 99 Q1778.8 101.2 1782 101.4" stroke-width="0.9"/>
      <path d="M1780.2 110.6 L1778.8 112.2 Q1777.4 114 1779.2 115.6 Q1780.8 117 1782.6 115.4 L1786.6 111.4 Q1788 109.8 1786.4 108.2"/>
      <path d="M1783.4 110.6 Q1782 109 1783.6 107.2 L1787.6 103.4 Q1789.4 101.8 1791 103.4 Q1792.6 105 1791 106.8 L1789.6 108.4"/>
    </g></svg><span class="t" style="left:1764.70px;top:122.28px;font-size:12.5px;color:#262626;transform:scaleX(0.8435);">Crea</span><span class="t" style="left:1757.80px;top:137.97px;font-size:12.5px;color:#262626;transform:scaleX(0.8679);">un PDF</span><span class="t" style="left:1738.40px;top:162.10px;font-size:12px;color:#262626;transform:scaleX(0.9689);">Adobe Acrobat</span><svg class="r" style="left:1892px;top:161px;" width="12" height="7" viewBox="0 0 12 7"><path d="M1 1 L6 6 L11 1" fill="none" stroke="#333" stroke-width="1.2"/></svg><div class="r" style="left:8.5px;top:186.5px;width:101px;height:25px;background:#fff;border:1px solid #dcdcdc;border-radius:5px;box-sizing:border-box;"></div><span class="t" style="left:15.60px;top:194.03px;font-size:12.5px;color:#262626;transform:scaleX(0.9091);">G22</span><svg class="r" style="left:91px;top:196px;" width="13" height="8" viewBox="0 0 13 8"><path d="M1 1.2 L6.5 6.5 L12 1.2" fill="none" stroke="#333" stroke-width="1.2"/></svg><div class="r" style="left:119px;top:195.5px;width:2.2px;height:2.2px;background:#6e6e6e;border-radius:1px;"></div><div class="r" style="left:119px;top:199.2px;width:2.2px;height:2.2px;background:#6e6e6e;border-radius:1px;"></div><div class="r" style="left:119px;top:202.9px;width:2.2px;height:2.2px;background:#6e6e6e;border-radius:1px;"></div><div class="r" style="left:130.5px;top:186.5px;width:73px;height:25px;background:#fff;border:1px solid #dcdcdc;border-radius:5px;box-sizing:border-box;"></div><svg class="r" style="left:136px;top:192px;" width="14" height="14" viewBox="0 0 14 14"><path d="M1 1 L13 13 M13 1 L1 13" stroke="#b5b5b5" stroke-width="1.1"/></svg><svg class="r" style="left:158px;top:192px;" width="18" height="13" viewBox="0 0 18 13"><path d="M1 7 L6.5 12 L17 1" fill="none" stroke="#b5b5b5" stroke-width="1.1"/></svg><span class="t" style="left:184.00px;top:192.15px;font-size:15px;color:#262626;transform:scaleX(1.2017);font-family:'Liberation Serif';font-style:italic;">fx</span><div class="r" style="left:208.5px;top:186.5px;width:1703.5px;height:65px;background:#fff;border:1px solid #dcdcdc;border-radius:5px;box-sizing:border-box;"></div><svg class="r" style="left:1895px;top:193px;" width="12" height="8" viewBox="0 0 12 8"><path d="M1 7 L6 2 L11 7" fill="none" stroke="#333" stroke-width="1.2"/></svg><div class="r" style="left:26px;top:279px;width:1872px;height:699px;background:#fff;"></div><svg class="r" style="left:0;top:0" width="1920" height="1080"><rect x="26" y="297" width="1872" height="1" fill="#e0e0e0"/><rect x="26" y="316" width="1872" height="1" fill="#e0e0e0"/><rect x="26" y="335" width="1872" height="1" fill="#e0e0e0"/><rect x="26" y="354" width="1872" height="1" fill="#e0e0e0"/><rect x="26" y="373" width="1872" height="1" fill="#e0e0e0"/><rect x="26" y="392" width="1872" height="1" fill="#e0e0e0"/><rect x="26" y="411" width="1872" height="1" fill="#e0e0e0"/><rect x="26" y="430" width="1872" height="1" fill="#e0e0e0"/><rect x="26" y="449" width="1872" height="1" fill="#e0e0e0"/><rect x="26" y="468" width="1872" height="1" fill="#e0e0e0"/><rect x="26" y="487" width="1872" height="1" fill="#e0e0e0"/><rect x="26" y="506" width="1872" height="1" fill="#e0e0e0"/><rect x="26" y="525" width="1872" height="1" fill="#e0e0e0"/><rect x="26" y="544" width="1872" height="1" fill="#e0e0e0"/><rect x="26" y="563" width="1872" height="1" fill="#e0e0e0"/><rect x="26" y="582" width="1872" height="1" fill="#e0e0e0"/><rect x="26" y="601" width="1872" height="1" fill="#e0e0e0"/><rect x="26" y="620" width="1872" height="1" fill="#e0e0e0"/><rect x="26" y="639" width="1872" height="1" fill="#e0e0e0"/><rect x="26" y="658" width="1872" height="1" fill="#e0e0e0"/><rect x="26" y="677" width="1872" height="1" fill="#e0e0e0"/><rect x="26" y="696" width="1872" height="1" fill="#e0e0e0"/><rect x="26" y="715" width="1872" height="1" fill="#e0e0e0"/><rect x="26" y="734" width="1872" height="1" fill="#e0e0e0"/><rect x="26" y="753" width="1872" height="1" fill="#e0e0e0"/><rect x="26" y="772" width="1872" height="1" fill="#e0e0e0"/><rect x="26" y="791" width="1872" height="1" fill="#e0e0e0"/><rect x="26" y="810" width="1872" height="1" fill="#e0e0e0"/><rect x="26" y="829" width="1872" height="1" fill="#e0e0e0"/><rect x="26" y="848" width="1872" height="1" fill="#e0e0e0"/><rect x="26" y="867" width="1872" height="1" fill="#e0e0e0"/><rect x="26" y="886" width="1872" height="1" fill="#e0e0e0"/><rect x="26" y="905" width="1872" height="1" fill="#e0e0e0"/><rect x="26" y="924" width="1872" height="1" fill="#e0e0e0"/><rect x="26" y="943" width="1872" height="1" fill="#e0e0e0"/><rect x="26" y="962" width="1872" height="1" fill="#e0e0e0"/><rect x="115" y="279" width="1" height="699" fill="#e0e0e0"/><rect x="231" y="279" width="1" height="699" fill="#e0e0e0"/><rect x="360" y="279" width="1" height="699" fill="#e0e0e0"/><rect x="401" y="279" width="1" height="699" fill="#e0e0e0"/><rect x="465" y="279" width="1" height="699" fill="#e0e0e0"/><rect x="516" y="279" width="1" height="699" fill="#e0e0e0"/><rect x="580" y="279" width="1" height="699" fill="#e0e0e0"/><rect x="644" y="279" width="1" height="699" fill="#e0e0e0"/><rect x="708" y="279" width="1" height="699" fill="#e0e0e0"/><rect x="772" y="279" width="1" height="699" fill="#e0e0e0"/><rect x="836" y="279" width="1" height="699" fill="#e0e0e0"/><rect x="900" y="279" width="1" height="699" fill="#e0e0e0"/><rect x="964" y="279" width="1" height="699" fill="#e0e0e0"/><rect x="1028" y="279" width="1" height="699" fill="#e0e0e0"/><rect x="1092" y="279" width="1" height="699" fill="#e0e0e0"/><rect x="1156" y="279" width="1" height="699" fill="#e0e0e0"/><rect x="1220" y="279" width="1" height="699" fill="#e0e0e0"/><rect x="1284" y="279" width="1" height="699" fill="#e0e0e0"/><rect x="1348" y="279" width="1" height="699" fill="#e0e0e0"/><rect x="1412" y="279" width="1" height="699" fill="#e0e0e0"/><rect x="1476" y="279" width="1" height="699" fill="#e0e0e0"/><rect x="1540" y="279" width="1" height="699" fill="#e0e0e0"/><rect x="1604" y="279" width="1" height="699" fill="#e0e0e0"/><rect x="1668" y="279" width="1" height="699" fill="#e0e0e0"/><rect x="1732" y="279" width="1" height="699" fill="#e0e0e0"/><rect x="1796" y="279" width="1" height="699" fill="#e0e0e0"/><rect x="1860" y="279" width="1" height="699" fill="#e0e0e0"/></svg><div class="r" style="left:26px;top:259px;width:1872px;height:19px;background:#f0f0f0;"></div><div class="r" style="left:516px;top:259px;width:64px;height:19px;background:#d3d3d3;"></div><div class="r" style="left:0px;top:278px;width:1898px;height:1px;background:#ababab;"></div><div class="r" style="left:516px;top:277px;width:65px;height:2px;background:#225f3c;"></div><div class="r" style="left:115px;top:259px;width:1px;height:19px;background:#ababab;"></div><span class="t" style="left:66.33px;top:263.17px;font-size:12.5px;color:#262626;">A</span><div class="r" style="left:231px;top:259px;width:1px;height:19px;background:#ababab;"></div><span class="t" style="left:169.32px;top:263.17px;font-size:12.5px;color:#262626;">B</span><div class="r" style="left:360px;top:259px;width:1px;height:19px;background:#ababab;"></div><span class="t" style="left:291.48px;top:263.17px;font-size:12.5px;color:#262626;">C</span><div class="r" style="left:401px;top:259px;width:1px;height:19px;background:#ababab;"></div><span class="t" style="left:376.48px;top:263.17px;font-size:12.5px;color:#262626;">D</span><div class="r" style="left:465px;top:259px;width:1px;height:19px;background:#ababab;"></div><span class="t" style="left:429.32px;top:263.17px;font-size:12.5px;color:#262626;">E</span><div class="r" style="left:516px;top:259px;width:1px;height:19px;background:#ababab;"></div><span class="t" style="left:487.18px;top:263.17px;font-size:12.5px;color:#262626;">F</span><div class="r" style="left:580px;top:259px;width:1px;height:19px;background:#ababab;"></div><span class="t" style="left:543.65px;top:263.17px;font-size:12.5px;color:#1d5e39;">G</span><div class="r" style="left:644px;top:259px;width:1px;height:19px;background:#ababab;"></div><span class="t" style="left:607.98px;top:263.17px;font-size:12.5px;color:#262626;">H</span><div class="r" style="left:708px;top:259px;width:1px;height:19px;background:#ababab;"></div><span class="t" style="left:674.77px;top:263.17px;font-size:12.5px;color:#262626;">I</span><div class="r" style="left:772px;top:259px;width:1px;height:19px;background:#ababab;"></div><span class="t" style="left:737.38px;top:263.17px;font-size:12.5px;color:#262626;">J</span><div class="r" style="left:836px;top:259px;width:1px;height:19px;background:#ababab;"></div><span class="t" style="left:800.33px;top:263.17px;font-size:12.5px;color:#262626;">K</span><div class="r" style="left:900px;top:259px;width:1px;height:19px;background:#ababab;"></div><span class="t" style="left:865.02px;top:263.17px;font-size:12.5px;color:#262626;">L</span><div class="r" style="left:964px;top:259px;width:1px;height:19px;background:#ababab;"></div><span class="t" style="left:927.30px;top:263.17px;font-size:12.5px;color:#262626;">M</span><div class="r" style="left:1028px;top:259px;width:1px;height:19px;background:#ababab;"></div><span class="t" style="left:991.98px;top:263.17px;font-size:12.5px;color:#262626;">N</span><div class="r" style="left:1092px;top:259px;width:1px;height:19px;background:#ababab;"></div><span class="t" style="left:1055.65px;top:263.17px;font-size:12.5px;color:#262626;">O</span><div class="r" style="left:1156px;top:259px;width:1px;height:19px;background:#ababab;"></div><span class="t" style="left:1120.33px;top:263.17px;font-size:12.5px;color:#262626;">P</span><div class="r" style="left:1220px;top:259px;width:1px;height:19px;background:#ababab;"></div><span class="t" style="left:1183.65px;top:263.17px;font-size:12.5px;color:#262626;">Q</span><div class="r" style="left:1284px;top:259px;width:1px;height:19px;background:#ababab;"></div><span class="t" style="left:1247.97px;top:263.17px;font-size:12.5px;color:#262626;">R</span><div class="r" style="left:1348px;top:259px;width:1px;height:19px;background:#ababab;"></div><span class="t" style="left:1312.33px;top:263.17px;font-size:12.5px;color:#262626;">S</span><div class="r" style="left:1412px;top:259px;width:1px;height:19px;background:#ababab;"></div><span class="t" style="left:1376.67px;top:263.17px;font-size:12.5px;color:#262626;">T</span><div class="r" style="left:1476px;top:259px;width:1px;height:19px;background:#ababab;"></div><span class="t" style="left:1439.97px;top:263.17px;font-size:12.5px;color:#262626;">U</span><div class="r" style="left:1540px;top:259px;width:1px;height:19px;background:#ababab;"></div><span class="t" style="left:1504.33px;top:263.17px;font-size:12.5px;color:#262626;">V</span><div class="r" style="left:1604px;top:259px;width:1px;height:19px;background:#ababab;"></div><span class="t" style="left:1566.60px;top:263.17px;font-size:12.5px;color:#262626;">W</span><div class="r" style="left:1668px;top:259px;width:1px;height:19px;background:#ababab;"></div><span class="t" style="left:1632.33px;top:263.17px;font-size:12.5px;color:#262626;">X</span><div class="r" style="left:1732px;top:259px;width:1px;height:19px;background:#ababab;"></div><span class="t" style="left:1696.33px;top:263.17px;font-size:12.5px;color:#262626;">Y</span><div class="r" style="left:1796px;top:259px;width:1px;height:19px;background:#ababab;"></div><span class="t" style="left:1760.67px;top:263.17px;font-size:12.5px;color:#262626;">Z</span><div class="r" style="left:1860px;top:259px;width:1px;height:19px;background:#ababab;"></div><span class="t" style="left:1820.15px;top:263.17px;font-size:12.5px;color:#262626;">AA</span><div class="r" style="left:1924px;top:259px;width:1px;height:19px;background:#ababab;"></div><span class="t" style="left:1884.15px;top:263.17px;font-size:12.5px;color:#262626;">AB</span><div class="r" style="left:25px;top:259px;width:1px;height:719px;background:#a9a9a9;"></div><svg class="r" style="left:10px;top:264px;" width="13" height="12" viewBox="0 0 13 12"><path d="M12 0.5 V11.5 H1 Z" fill="#b9b9b9"/></svg><div class="r" style="left:0px;top:279px;width:25px;height:699px;background:#f0f0f0;"></div><div class="r" style="left:0px;top:678px;width:24px;height:18px;background:#d3d3d3;"></div><div class="r" style="left:0px;top:297px;width:25px;height:1px;background:#bdbdbd;"></div><span class="t" style="left:9.22px;top:283.27px;font-size:12.5px;color:#262626;">1</span><div class="r" style="left:0px;top:316px;width:25px;height:1px;background:#bdbdbd;"></div><span class="t" style="left:9.22px;top:302.27px;font-size:12.5px;color:#262626;">2</span><div class="r" style="left:0px;top:335px;width:25px;height:1px;background:#bdbdbd;"></div><span class="t" style="left:9.22px;top:321.27px;font-size:12.5px;color:#262626;">3</span><div class="r" style="left:0px;top:354px;width:25px;height:1px;background:#bdbdbd;"></div><span class="t" style="left:9.22px;top:340.27px;font-size:12.5px;color:#262626;">4</span><div class="r" style="left:0px;top:373px;width:25px;height:1px;background:#bdbdbd;"></div><span class="t" style="left:9.22px;top:359.27px;font-size:12.5px;color:#262626;">5</span><div class="r" style="left:0px;top:392px;width:25px;height:1px;background:#bdbdbd;"></div><span class="t" style="left:9.22px;top:378.27px;font-size:12.5px;color:#262626;">6</span><div class="r" style="left:0px;top:411px;width:25px;height:1px;background:#bdbdbd;"></div><span class="t" style="left:9.22px;top:397.27px;font-size:12.5px;color:#262626;">7</span><div class="r" style="left:0px;top:430px;width:25px;height:1px;background:#bdbdbd;"></div><span class="t" style="left:9.22px;top:416.27px;font-size:12.5px;color:#262626;">8</span><div class="r" style="left:0px;top:449px;width:25px;height:1px;background:#bdbdbd;"></div><span class="t" style="left:9.22px;top:435.27px;font-size:12.5px;color:#262626;">9</span><div class="r" style="left:0px;top:468px;width:25px;height:1px;background:#bdbdbd;"></div><span class="t" style="left:5.75px;top:454.27px;font-size:12.5px;color:#262626;">10</span><div class="r" style="left:0px;top:487px;width:25px;height:1px;background:#bdbdbd;"></div><span class="t" style="left:6.20px;top:473.27px;font-size:12.5px;color:#262626;">11</span><div class="r" style="left:0px;top:506px;width:25px;height:1px;background:#bdbdbd;"></div><span class="t" style="left:5.75px;top:492.27px;font-size:12.5px;color:#262626;">12</span><div class="r" style="left:0px;top:525px;width:25px;height:1px;background:#bdbdbd;"></div><span class="t" style="left:5.75px;top:511.27px;font-size:12.5px;color:#262626;">13</span><div class="r" style="left:0px;top:544px;width:25px;height:1px;background:#bdbdbd;"></div><span class="t" style="left:5.75px;top:530.27px;font-size:12.5px;color:#262626;">14</span><div class="r" style="left:0px;top:563px;width:25px;height:1px;background:#bdbdbd;"></div><span class="t" style="left:5.75px;top:549.27px;font-size:12.5px;color:#262626;">15</span><div class="r" style="left:0px;top:582px;width:25px;height:1px;background:#bdbdbd;"></div><span class="t" style="left:5.75px;top:568.27px;font-size:12.5px;color:#262626;">16</span><div class="r" style="left:0px;top:601px;width:25px;height:1px;background:#bdbdbd;"></div><span class="t" style="left:5.75px;top:587.27px;font-size:12.5px;color:#262626;">17</span><div class="r" style="left:0px;top:620px;width:25px;height:1px;background:#bdbdbd;"></div><span class="t" style="left:5.75px;top:606.27px;font-size:12.5px;color:#262626;">18</span><div class="r" style="left:0px;top:639px;width:25px;height:1px;background:#bdbdbd;"></div><span class="t" style="left:5.75px;top:625.27px;font-size:12.5px;color:#262626;">19</span><div class="r" style="left:0px;top:658px;width:25px;height:1px;background:#bdbdbd;"></div><span class="t" style="left:5.75px;top:644.27px;font-size:12.5px;color:#262626;">20</span><div class="r" style="left:0px;top:677px;width:25px;height:1px;background:#bdbdbd;"></div><span class="t" style="left:5.75px;top:663.27px;font-size:12.5px;color:#262626;">21</span><div class="r" style="left:0px;top:696px;width:25px;height:1px;background:#bdbdbd;"></div><span class="t" style="left:5.75px;top:682.27px;font-size:12.5px;color:#1d5e39;">22</span><div class="r" style="left:0px;top:715px;width:25px;height:1px;background:#bdbdbd;"></div><span class="t" style="left:5.75px;top:701.27px;font-size:12.5px;color:#262626;">23</span><div class="r" style="left:0px;top:734px;width:25px;height:1px;background:#bdbdbd;"></div><span class="t" style="left:5.75px;top:720.27px;font-size:12.5px;color:#262626;">24</span><div class="r" style="left:0px;top:753px;width:25px;height:1px;background:#bdbdbd;"></div><span class="t" style="left:5.75px;top:739.27px;font-size:12.5px;color:#262626;">25</span><div class="r" style="left:0px;top:772px;width:25px;height:1px;background:#bdbdbd;"></div><span class="t" style="left:5.75px;top:758.27px;font-size:12.5px;color:#262626;">26</span><div class="r" style="left:0px;top:791px;width:25px;height:1px;background:#bdbdbd;"></div><span class="t" style="left:5.75px;top:777.27px;font-size:12.5px;color:#262626;">27</span><div class="r" style="left:0px;top:810px;width:25px;height:1px;background:#bdbdbd;"></div><span class="t" style="left:5.75px;top:796.27px;font-size:12.5px;color:#262626;">28</span><div class="r" style="left:0px;top:829px;width:25px;height:1px;background:#bdbdbd;"></div><span class="t" style="left:5.75px;top:815.27px;font-size:12.5px;color:#262626;">29</span><div class="r" style="left:0px;top:848px;width:25px;height:1px;background:#bdbdbd;"></div><span class="t" style="left:5.75px;top:834.27px;font-size:12.5px;color:#262626;">30</span><div class="r" style="left:0px;top:867px;width:25px;height:1px;background:#bdbdbd;"></div><span class="t" style="left:5.75px;top:853.27px;font-size:12.5px;color:#262626;">31</span><div class="r" style="left:0px;top:886px;width:25px;height:1px;background:#bdbdbd;"></div><span class="t" style="left:5.75px;top:872.27px;font-size:12.5px;color:#262626;">32</span><div class="r" style="left:0px;top:905px;width:25px;height:1px;background:#bdbdbd;"></div><span class="t" style="left:5.75px;top:891.27px;font-size:12.5px;color:#262626;">33</span><div class="r" style="left:0px;top:924px;width:25px;height:1px;background:#bdbdbd;"></div><span class="t" style="left:5.75px;top:910.27px;font-size:12.5px;color:#262626;">34</span><div class="r" style="left:0px;top:943px;width:25px;height:1px;background:#bdbdbd;"></div><span class="t" style="left:5.75px;top:929.27px;font-size:12.5px;color:#262626;">35</span><div class="r" style="left:0px;top:962px;width:25px;height:1px;background:#bdbdbd;"></div><span class="t" style="left:5.75px;top:948.27px;font-size:12.5px;color:#262626;">36</span><span class="t" style="left:5.75px;top:967.27px;font-size:12.5px;color:#262626;">37</span><div class="r" style="left:24px;top:677px;width:2px;height:20px;background:#1d6b3f;"></div><span class="t" style="left:29.60px;top:284.27px;font-size:12.5px;color:#000;font-weight:bold;transform:scaleX(0.9636);">GROUP CODE</span><span class="t" style="left:120.00px;top:284.27px;font-size:12.5px;color:#000;font-weight:bold;transform:scaleX(0.9633);">SUBGROUP CODE</span><span class="t" style="left:236.25px;top:284.27px;font-size:12.5px;color:#000;font-weight:bold;transform:scaleX(0.9868);">COMPONENT CODE</span><span class="t" style="left:364.40px;top:284.27px;font-size:12.5px;color:#000;font-weight:bold;transform:scaleX(0.9197);">CODE</span><span class="t" style="left:405.20px;top:284.27px;font-size:12.5px;color:#000;font-weight:bold;transform:scaleX(0.9094);">SEVERITY</span><span class="t" style="left:469.80px;top:284.27px;font-size:12.5px;color:#000;font-weight:bold;transform:scaleX(0.9674);">FMECA</span><div class="r" style="left:26px;top:297px;width:491px;height:1px;background:#000;"></div><div class="r" style="left:115px;top:279px;width:1px;height:19px;background:#000;"></div><div class="r" style="left:231px;top:279px;width:1px;height:19px;background:#000;"></div><div class="r" style="left:360px;top:279px;width:1px;height:19px;background:#000;"></div><div class="r" style="left:401px;top:279px;width:1px;height:19px;background:#000;"></div><div class="r" style="left:465px;top:279px;width:1px;height:19px;background:#000;"></div><div class="r" style="left:516px;top:279px;width:1px;height:19px;background:#000;"></div><div class="r" style="left:515px;top:676px;width:67px;height:22px;background:transparent;border:2px solid #1d6b3f;box-sizing:border-box;"></div><div class="r" style="left:576px;top:692px;width:7px;height:7px;background:#fff;"></div><div class="r" style="left:578px;top:694px;width:5px;height:5px;background:#1e7145;"></div><div class="r" style="left:1898px;top:259px;width:22px;height:719px;background:#f0f0f0;"></div><div class="r" style="left:1901px;top:259px;width:16px;height:719px;background:#f7f7f7;border-radius:8px;"></div><svg class="r" style="left:1904px;top:263px;" width="11" height="9" viewBox="0 0 11 9"><path d="M1 8 L5.5 1.5 L10 8 Z" fill="#707070" stroke="#707070" stroke-width="1" stroke-linejoin="round"/></svg><div class="r" style="left:1905px;top:277px;width:9px;height:667px;background:#707070;border-radius:4.5px;"></div><svg class="r" style="left:1904px;top:968px;" width="11" height="9" viewBox="0 0 11 9"><path d="M1 1 L5.5 7.5 L10 1 Z" fill="#707070" stroke="#707070" stroke-width="1" stroke-linejoin="round"/></svg><div class="r" style="left:0px;top:978px;width:1920px;height:32px;background:#f0f0f0;"></div><div class="r" style="left:0px;top:978px;width:1920px;height:12px;background:#fff;"></div><div class="r" style="left:0px;top:978px;width:115.5px;height:32px;background:#f0f0f0;border-top-right-radius:7px;"></div><div class="r" style="left:243.5px;top:978px;width:1676.5px;height:32px;background:#f0f0f0;border-top-left-radius:7px;"></div><div class="r" style="left:0px;top:1006px;width:1920px;height:4px;background:#f0f0f0;"></div><div class="r" style="left:115.5px;top:978px;width:128px;height:28px;background:#fff;border-radius:0 0 7px 7px;box-shadow:0 1px 0.5px rgba(0,0,0,0.07);"></div><div class="r" style="left:0px;top:1010px;width:1920px;height:1px;background:#c2c2c2;"></div><svg class="r" style="left:28px;top:988px;" width="8" height="11" viewBox="0 0 8 11"><path d="M6.5 1 L1.5 5.5 L6.5 10" fill="none" stroke="#9a9a9a" stroke-width="1.1"/></svg><svg class="r" style="left:60px;top:988px;" width="8" height="11" viewBox="0 0 8 11"><path d="M1.5 1 L6.5 5.5 L1.5 10" fill="none" stroke="#9a9a9a" stroke-width="1.1"/></svg><span class="t" style="left:124.40px;top:984.20px;font-size:14px;color:#262626;transform:scaleX(0.8624);-webkit-text-stroke:0.25px #262626;">REPLACE CAUSES</span><div class="r" style="left:124px;top:1000.5px;width:111px;height:2.3px;background:#1d6b3f;border-radius:1px;"></div><div class="r" style="left:247px;top:986px;width:1px;height:17px;background:#c4c4c4;"></div><span class="t" style="left:264.60px;top:987.00px;font-size:14px;color:#3b3b3b;transform:scaleX(0.8803);">REPLACE CAUSES TRANSLATIONS</span><div class="r" style="left:488px;top:986px;width:1px;height:17px;background:#c4c4c4;"></div><svg class="r" style="left:531px;top:989px;" width="11" height="11" viewBox="0 0 11 11"><path d="M5.5 0.5 V10.5 M0.5 5.5 H10.5" stroke="#444" stroke-width="1.1"/></svg><div class="r" style="left:1154px;top:989.5px;width:2px;height:2px;background:#888;"></div><div class="r" style="left:1154px;top:993.5px;width:2px;height:2px;background:#888;"></div><div class="r" style="left:1154px;top:997.5px;width:2px;height:2px;background:#888;"></div><div class="r" style="left:1171px;top:986px;width:726px;height:16px;background:#f7f7f7;border-radius:8px;"></div><svg class="r" style="left:1175px;top:989px;" width="9" height="11" viewBox="0 0 9 11"><path d="M8 1 L1.5 5.5 L8 10 Z" fill="#707070" stroke="#707070" stroke-width="1" stroke-linejoin="round"/></svg><div class="r" style="left:1188px;top:990px;width:670px;height:9px;background:#707070;border-radius:4.5px;"></div><svg class="r" style="left:1888px;top:989px;" width="9" height="11" viewBox="0 0 9 11"><path d="M1 1 L7.5 5.5 L1 10 Z" fill="#707070" stroke="#707070" stroke-width="1" stroke-linejoin="round"/></svg><div class="r" style="left:0px;top:1011px;width:1920px;height:21px;background:#f4f4f4;"></div><div class="r" style="left:0px;top:1032px;width:1920px;height:1px;background:#c2c2c2;"></div><span class="t" style="left:7.50px;top:1016.72px;font-size:11.5px;color:#262626;transform:scaleX(0.9956);">Pronto</span><svg class="r" style="left:1424px;top:1013px" width="20" height="17" viewBox="1424 1013 20 17"><path d="M1431.2 1023.4 H1426.9 V1015.9 H1439.1 V1019.8" fill="none" stroke="#1e1e1e" stroke-width="1.2"/>
      <polygon points="1439.90,1023.40 1437.98,1024.95 1437.60,1027.38 1435.30,1026.50 1433.00,1027.38 1432.62,1024.95 1430.70,1023.40 1432.62,1021.85 1433.00,1019.42 1435.30,1020.30 1437.60,1019.42 1437.98,1021.85" fill="#f3f3f3" stroke="#1e1e1e" stroke-width="1.1" stroke-linejoin="round"/>
      <circle cx="1435.3" cy="1023.4" r="1.1" fill="#1e1e1e"/></svg><span class="t" style="left:1443.50px;top:1016.30px;font-size:12px;color:#262626;transform:scaleX(0.9561);">Impostazioni di visualizzazione</span><div class="r" style="left:1620px;top:1011px;width:40px;height:21px;background:#dcdcdc;"></div><svg class="r" style="left:1630px;top:1012px" width="100" height="18" viewBox="1630 1012 100 18"><g fill="none" stroke="#1e1e1e" stroke-width="1.25" shape-rendering="crispEdges">
      <rect x="1633.6" y="1014.6" width="12" height="12"/><path d="M1637.6 1014.6 V1026.6 M1641.6 1014.6 V1026.6 M1633.6 1018.6 H1645.6 M1633.6 1022.6 H1645.6"/>
      <rect x="1673.6" y="1014.6" width="13" height="12"/><rect x="1676.6" y="1016.6" width="7" height="8"/><path d="M1678 1018.6 H1682.2 M1678 1020.6 H1682.2 M1678 1022.6 H1682.2"/>
      <rect x="1713.6" y="1014.6" width="13" height="12"/><path d="M1717.6 1014.6 V1021.6 M1721.6 1014.6 V1021.6 M1713.6 1021.6 H1721.6"/>
    </g></svg><div class="r" style="left:1746px;top:1020px;width:8px;height:1.2px;background:#333;"></div><div class="r" style="left:1759px;top:1020.5px;width:100px;height:1px;background:#c8c8c8;"></div><div class="r" style="left:1807px;top:1016px;width:5px;height:10.5px;background:#707070;border-radius:1px;"></div><svg class="r" style="left:1863px;top:1015px;" width="10" height="10" viewBox="0 0 10 10"><path d="M5 0.5 V9.5 M0.5 5 H9.5" stroke="#333" stroke-width="1.1"/></svg><span class="t" style="left:1885.60px;top:1016.12px;font-size:11.5px;color:#262626;transform:scaleX(0.8946);">100%</span><div class="r" style="left:0px;top:1033px;width:1920px;height:47px;background:#ededed;"></div><svg class="r" style="left:20px;top:1044px;" width="22" height="22" viewBox="0 0 22 22"><defs><linearGradient id="sun" x1="0" y1="0" x2="1" y2="1"><stop offset="0" stop-color="#f3bf3a"/><stop offset="1" stop-color="#e9580c"/></linearGradient></defs><circle cx="11" cy="11" r="10" fill="url(#sun)"/></svg><span class="t" style="left:50.60px;top:1043.03px;font-size:11.5px;color:#1a1a1a;transform:scaleX(0.9494);">28°C</span><span class="t" style="left:50.60px;top:1058.62px;font-size:11.5px;color:#505050;transform:scaleX(1.0561);">Soleggiato</span><svg class="r" style="left:374px;top:1044px;" width="24" height="24" viewBox="0 0 24 24"><defs><linearGradient id="wl" x1="0" y1="0" x2="1" y2="1"><stop offset="0" stop-color="#52cdf7"/><stop offset="1" stop-color="#0a6ed1"/></linearGradient></defs>
      <rect x="0.8" y="0.8" width="10.8" height="10.8" rx="0.8" fill="url(#wl)"/><rect x="12.4" y="0.8" width="10.8" height="10.8" rx="0.8" fill="url(#wl)"/>
      <rect x="0.8" y="12.4" width="10.8" height="10.8" rx="0.8" fill="url(#wl)"/><rect x="12.4" y="12.4" width="10.8" height="10.8" rx="0.8" fill="url(#wl)"/></svg><div class="r" style="left:411.5px;top:1040px;width:219px;height:31.5px;background:#fafafa;border:1px solid #d6d6d6;border-radius:16px;box-sizing:border-box;"></div><svg class="r" style="left:422px;top:1048px;" width="16" height="16" viewBox="0 0 16 16"><circle cx="6.8" cy="6.8" r="5.6" fill="none" stroke="#1a1a1a" stroke-width="1.6"/><line x1="10.8" y1="10.8" x2="14.5" y2="14.5" stroke="#1a1a1a" stroke-width="1.8" stroke-linecap="round"/></svg><span class="t" style="left:448.30px;top:1050.25px;font-size:14px;color:#555;transform:scaleX(0.8916);">Cerca</span><svg class="r" style="left:640px;top:1042px" width="30" height="28" viewBox="640 1042 30 28"><defs><linearGradient id="tv1" x1="0" y1="0" x2="1" y2="1"><stop offset="0" stop-color="#ffffff"/><stop offset="1" stop-color="#e2e2e2"/></linearGradient>
      <linearGradient id="tv2" x1="0" y1="0" x2="0" y2="1"><stop offset="0" stop-color="#3e3e3e"/><stop offset="1" stop-color="#0e0e0e"/></linearGradient>
      <linearGradient id="tv3" x1="0" y1="0" x2="1" y2="1"><stop offset="0" stop-color="#cfcfcf"/><stop offset="1" stop-color="#a6a6a6"/></linearGradient></defs>
      <rect x="648.9" y="1045" width="17.7" height="15.6" rx="1" fill="url(#tv1)"/>
      <rect x="643" y="1051" width="18" height="16" rx="1" fill="url(#tv2)"/>
      <rect x="648.9" y="1051" width="12.1" height="9.6" rx="0.8" fill="url(#tv3)"/></svg><svg class="r" style="left:686px;top:1043px" width="26" height="27" viewBox="686 1043 26 27"><g fill="#c8321a"><rect x="689" y="1046" width="2.7" height="2.7" rx="0.8"/><rect x="693" y="1046" width="2.7" height="2.7" rx="0.5"/><rect x="697" y="1046" width="2.7" height="2.7" rx="0.8"/>
      <rect x="689" y="1050" width="2.7" height="2.7" rx="0.5"/><rect x="689" y="1054" width="2.7" height="2.7" rx="0.8"/></g>
      <path d="M701.4 1049.5 V1063 M692.4 1058.5 H706.5" stroke="#8d939a" stroke-width="1.9" stroke-linecap="round"/>
      <path d="M701.4 1058.5 V1063 M701.4 1058.5 H706" stroke="#2b95dc" stroke-width="1.9"/>
      <circle cx="708.5" cy="1057.6" r="2.3" fill="#bff0ff" stroke="#2b95dc" stroke-width="1.4"/>
      <circle cx="700.4" cy="1065.4" r="2.4" fill="#bff0ff" stroke="#2b95dc" stroke-width="1.4"/></svg><svg class="r" style="left:730px;top:1045px;" width="26" height="23" viewBox="0 0 26 23"><path d="M1 3 Q1 1 3 1 H9 L11 3 H23 Q25 3 25 5 V20 Q25 22 23 22 H3 Q1 22 1 20 Z" fill="#f2be3d"/>
      <rect x="1" y="6" width="24" height="16" rx="1.5" fill="#fcd660"/>
      <rect x="6" y="15" width="14" height="7" rx="1" fill="#1b74c8"/><rect x="8" y="16.5" width="10" height="3" fill="#3a96e8"/></svg><div class="r" style="left:739.8px;top:1072.5px;width:6px;height:3px;background:#8a8a8a;border-radius:1.5px;"></div><div class="r" style="left:767px;top:1035.5px;width:40px;height:40px;background:#ecb9b9;border-radius:4px;"></div><div class="r" style="left:771px;top:1072.5px;width:32px;height:2.5px;background:#c42b1c;border-radius:1.5px;"></div><svg class="r" style="left:774px;top:1043px;" width="26" height="24" viewBox="0 0 26 24"><circle cx="18" cy="8" r="3" fill="#7b83eb"/><rect x="13.5" y="11.5" width="10" height="9" rx="4" fill="#5059c9"/>
      <circle cx="12" cy="6.5" r="4" fill="#7b83eb"/><path d="M6 10.5 H18 V18 Q18 23 12 23 Q6 23 6 18 Z" fill="#7b83eb"/>
      <rect x="1" y="7" width="11.5" height="11.5" rx="1.2" fill="#4b53bc"/><text x="3.8" y="16.2" font-family="Liberation Sans" font-weight="bold" font-size="9.5" fill="#fff">T</text></svg><div class="r" style="left:788.3px;top:1039px;width:15.6px;height:15.6px;background:#c42b1c;border-radius:50%;"></div><span class="t" style="left:792.88px;top:1041.30px;font-size:12px;color:#fff;">1</span><svg class="r" style="left:818px;top:1044px;" width="26" height="24" viewBox="0 0 26 24"><rect x="8" y="1" width="16" height="20" rx="1.5" fill="#0f6cbd"/><rect x="14" y="5" width="10" height="6" fill="#28a8ea"/>
      <path d="M8 11 L24 11 V21 Q24 23 22 23 H10 Q8 23 8 21 Z" fill="#1490df"/><path d="M8 12 L16 17 L24 12 V23 H8 Z" fill="#35b8f1"/>
      <rect x="1" y="6" width="12" height="12" rx="1.2" fill="#0a5bb0"/><text x="2.8" y="15.5" font-family="Liberation Sans" font-weight="bold" font-size="9.5" fill="#fff">O</text></svg><div class="r" style="left:827.8px;top:1072.5px;width:6px;height:3px;background:#8a8a8a;border-radius:1.5px;"></div><svg class="r" style="left:862px;top:1044px;" width="26" height="25" viewBox="0 0 26 25"><path d="M12.5 2 A10.5 10.5 0 1 1 6.5 21 L1.5 23 L3.2 18 A10.5 10.5 0 0 1 12.5 2 Z" fill="#fff" stroke="#1fa855" stroke-width="2"/>
      <path d="M8.5 7.5 Q9.5 6.5 10.3 7.5 L11.3 9.8 Q11.4 10.5 10.5 11.2 Q12 14 14.5 15 Q15.3 14 16 14.1 L18 15.3 Q18.6 16.3 17.5 17.2 Q15.5 18.6 11.5 16 Q7.5 12.8 7.3 9.8 Q7.3 8.5 8.5 7.5 Z" fill="#1fa855"/></svg><div class="r" style="left:876px;top:1039.5px;width:16px;height:16px;background:#1a73d0;border-radius:50%;"></div><span class="t" style="left:881.08px;top:1043.48px;font-size:10.5px;color:#fff;">2</span><svg class="r" style="left:906px;top:1044px;" width="26" height="26" viewBox="0 0 26 26"><circle cx="12.5" cy="12.5" r="11.5" fill="#db4437"/>
      <path d="M12.5 12.5 L2.5 18.3 A11.5 11.5 0 0 1 2.5 6.7 Z" fill="#0f9d58"/>
      <path d="M12.5 12.5 L2.5 18.3 A11.5 11.5 0 0 0 14 24 Z" fill="#0f9d58"/>
      <path d="M12.5 12.5 L24 12.5 A11.5 11.5 0 0 1 14 24 Z" fill="#f4c20d"/>
      <circle cx="12.5" cy="12.5" r="5.3" fill="#fff"/><circle cx="12.5" cy="12.5" r="4.2" fill="#4285f4"/></svg><div class="r" style="left:920px;top:1039px;width:16px;height:16px;background:#8e9aa3;border-radius:50%;"></div><span class="t" style="left:924.67px;top:1043.40px;font-size:10px;color:#fff;">V</span><div class="r" style="left:916.0px;top:1072.5px;width:6px;height:3px;background:#8a8a8a;border-radius:1.5px;"></div><svg class="r" style="left:949px;top:1042px;" width="28" height="28" viewBox="949 1042 28 28"><g transform="translate(963,1055.8) scale(0.93)"><rect x="-3" y="-10.5" width="11" height="6.4" rx="3.2" fill="#fff" stroke="#111" stroke-width="1.7" transform="rotate(0)"/><rect x="-3" y="-10.5" width="11" height="6.4" rx="3.2" fill="#fff" stroke="#111" stroke-width="1.7" transform="rotate(60)"/><rect x="-3" y="-10.5" width="11" height="6.4" rx="3.2" fill="#fff" stroke="#111" stroke-width="1.7" transform="rotate(120)"/><rect x="-3" y="-10.5" width="11" height="6.4" rx="3.2" fill="#fff" stroke="#111" stroke-width="1.7" transform="rotate(180)"/><rect x="-3" y="-10.5" width="11" height="6.4" rx="3.2" fill="#fff" stroke="#111" stroke-width="1.7" transform="rotate(240)"/><rect x="-3" y="-10.5" width="11" height="6.4" rx="3.2" fill="#fff" stroke="#111" stroke-width="1.7" transform="rotate(300)"/></g></svg><div class="r" style="left:960.0px;top:1072.5px;width:6px;height:3px;background:#8a8a8a;border-radius:1.5px;"></div><svg class="r" style="left:994px;top:1044px;" width="25" height="24" viewBox="0 0 25 24"><rect x="7" y="1" width="17" height="22" rx="1.5" fill="#ba5ad6"/><rect x="17" y="7" width="7" height="6" fill="#9e3dbd"/><rect x="17" y="13" width="7" height="6" fill="#7e2aa0"/>
      <rect x="1" y="6" width="12" height="12" rx="1.2" fill="#7719aa"/><text x="3" y="15.5" font-family="Liberation Sans" font-weight="bold" font-size="9.5" fill="#fff">N</text></svg><svg class="r" style="left:1038px;top:1044px;" width="26" height="25" viewBox="0 0 26 25"><path d="M2 2 H15 L19 6 V23 H2 Z" fill="#e8f3d0" stroke="#b8c8a0" stroke-width="0.8"/>
      <path d="M2 14 Q8 8 16 12 Q19 14 19 18 V23 H2 Z" fill="#6ac040"/>
      <ellipse cx="10" cy="13" rx="5" ry="3.5" fill="#3b8e20"/><path d="M16.5 17 L24 2" stroke="#d09a30" stroke-width="2"/></svg><svg class="r" style="left:1082px;top:1044px;" width="25" height="25" viewBox="0 0 25 25"><path d="M18 1 L24 4 V21 L18 24 L7 14 L3 17 L1 15.5 V9.5 L3 8 L7 11 Z" fill="#1f9cf0"/>
      <path d="M18 6.5 V18.5 L10.5 12.5 Z" fill="#ededed"/><path d="M18 1 L24 4 V21 L18 24 Z" fill="#0065a9"/><path d="M1 9.5 L3 8 L18 20 V24 Z" fill="#007acc" opacity="0.9"/></svg><div class="r" style="left:1092.0px;top:1072.5px;width:6px;height:3px;background:#8a8a8a;border-radius:1.5px;"></div><svg class="r" style="left:1126px;top:1045px;" width="26" height="21" viewBox="0 0 26 21"><rect x="1" y="1" width="24" height="19" rx="2" fill="#2b2b2b"/><rect x="1" y="1" width="24" height="3" rx="1" fill="#4a4a4a"/><rect x="11" y="1" width="7" height="3" fill="#6a6a6a"/>
      <path d="M5 8 L10 11.5 L5 15" fill="none" stroke="#e0e0e0" stroke-width="1.8"/><rect x="12" y="14" width="7" height="1.8" fill="#e0e0e0"/></svg><svg class="r" style="left:1170px;top:1044px;" width="26" height="25" viewBox="0 0 26 25"><rect x="1" y="1" width="23" height="17" fill="#2b2b2b"/><path d="M4 4 L7 6 L4 8" fill="none" stroke="#fff" stroke-width="0.9"/>
      <path d="M7 15 L13 10 L18 14 L12 20 Z" fill="#e23b3b"/><path d="M13 10 L19 6 L23 10 L18 14 Z" fill="#2f86d6"/><path d="M12 20 L18 14 L23 18 L17 24 Z" fill="#8acb3a"/><path d="M18 14 L23 10 L25 15 L23 18 Z" fill="#f2c230"/></svg><div class="r" style="left:1180.0px;top:1072.5px;width:6px;height:3px;background:#8a8a8a;border-radius:1.5px;"></div><svg class="r" style="left:1215px;top:1044px;" width="22" height="25" viewBox="0 0 22 25"><path d="M11 1 L21 6 V18 L11 23 L1 18 V6 Z" fill="#1a5a92"/><path d="M11 1 L21 6 L11 11 L1 6 Z" fill="#3d86c6"/><path d="M11 11 V23 L1 18 V6 Z" fill="#174d7e"/>
      <path d="M4 9 L10 12 V20 L4 17 Z M13 12 L18 9 V17 L13 20 Z" fill="none" stroke="#9cc3e6" stroke-width="0.8"/></svg><svg class="r" style="left:1257px;top:1042px" width="28" height="28" viewBox="1257 1042 28 28"><circle cx="1271" cy="1055.6" r="11.3" fill="#fff" stroke="#46a6aa" stroke-width="1.4"/>
      <path d="M1266.8 1066.3 Q1267.6 1060 1269.8 1057.6 Q1272.4 1061.4 1277.2 1063.4 Q1274 1067.6 1266.8 1066.3 Z" fill="#3b2a22"/>
      <path d="M1262.6 1062.4 Q1261.4 1054.5 1265.2 1050.6 Q1270.6 1046.2 1277.8 1051.2" fill="none" stroke="#3b2a22" stroke-width="0.9"/>
      <path d="M1262.4 1053.8 Q1264.2 1052.6 1264.6 1055.6 Q1263.6 1058.6 1262.8 1061" fill="none" stroke="#3b2a22" stroke-width="1.2"/>
      <circle cx="1269.3" cy="1050.7" r="0.9" fill="#3b2a22"/><ellipse cx="1275.6" cy="1052" rx="1.9" ry="1.3" fill="#3b2a22"/>
      <path d="M1273.6 1060.2 L1275.2 1058.4 L1275.8 1061.2 Z" fill="#fff" stroke="#3b2a22" stroke-width="0.5"/></svg><svg class="r" style="left:1302px;top:1042px" width="25" height="27" viewBox="1302 1042 25 27"><rect x="1305" y="1044.2" width="6" height="3.6" fill="#7fb2ec"/>
      <rect x="1311.4" y="1048.6" width="6" height="3.6" fill="#5b9be3"/>
      <rect x="1305" y="1053.2" width="6" height="3.6" fill="#1f70c8"/><rect x="1311.4" y="1053.2" width="6" height="3.6" fill="#ececec"/><rect x="1318" y="1053.2" width="6" height="3.6" fill="#fff" stroke="#e2e2e2" stroke-width="0.4"/>
      <rect x="1305" y="1058.2" width="6" height="3.6" fill="#ececec"/><rect x="1311.4" y="1058.2" width="6" height="3.6" fill="#fff"/><rect x="1318" y="1058.2" width="6" height="3.6" fill="#5b9be3"/>
      <rect x="1305" y="1063" width="6" height="3.6" fill="#0d5aa8"/><rect x="1311.4" y="1063" width="6" height="3.6" fill="#0d5aa8"/><rect x="1318" y="1063" width="6" height="3.6" fill="#0d5aa8"/></svg><svg class="r" style="left:1346px;top:1043px" width="26" height="26" viewBox="1346 1043 26 26"><defs><linearGradient id="mw" x1="0" y1="0" x2="0" y2="1"><stop offset="0" stop-color="#3b7db3"/><stop offset="1" stop-color="#235e8c"/></linearGradient></defs>
      <rect x="1347.5" y="1044.1" width="22.7" height="23" rx="3.2" fill="url(#mw)"/>
      <path d="M1351 1048.3 Q1354.5 1047 1357.6 1049.6 Q1360.4 1052 1361.8 1055.6 Q1363 1058.8 1365.6 1060.4 Q1367 1061.6 1366.4 1063 M1351 1048.3 Q1351.6 1051.6 1353.6 1054 Q1355 1056 1354.6 1058.4 L1355.6 1060 M1366.4 1063 L1364.2 1061.8 M1366 1060.6 L1364.4 1059.8" fill="none" stroke="#dbe8f2" stroke-width="0.8" stroke-linecap="round"/>
      <path d="M1364 1046.6 L1366.2 1048.8 L1368.4 1051 M1365 1046.2 Q1363.6 1047.6 1365 1048.6" fill="none" stroke="#fff" stroke-width="1.3" stroke-linecap="round"/></svg><svg class="r" style="left:1390px;top:1043px;" width="26" height="26" viewBox="0 0 26 26"><circle cx="13" cy="13" r="12" fill="#ef6b38"/><path d="M5.6 19.6 L14.6 10.8 Q16.2 9.4 17.4 10.6 Q18.4 11.8 17 13.2 L8 21.4" fill="#fff" stroke="#fff" stroke-width="0.6" stroke-linejoin="round"/><circle cx="18.6" cy="7.6" r="1.9" fill="#fff"/><path d="M9.5 15 L12.5 18" stroke="#ef6b38" stroke-width="0.7"/></svg><svg class="r" style="left:1433px;top:1042px" width="28" height="28" viewBox="1433 1042 28 28"><defs><linearGradient id="gr" x1="0" y1="0" x2="0" y2="1"><stop offset="0" stop-color="#7d858f"/><stop offset="1" stop-color="#5a626c"/></linearGradient>
      <linearGradient id="gb" x1="0" y1="0" x2="0" y2="1"><stop offset="0" stop-color="#1d6fd0"/><stop offset="1" stop-color="#0d4f9c"/></linearGradient></defs>
      <path d="M1455.05 1052.87 L1458.27 1053.14 L1458.27 1058.66 L1455.05 1058.93 L1454.10 1060.76 L1453.65 1061.36 L1455.02 1064.28 L1450.25 1067.04 L1448.40 1064.39 L1446.34 1064.47 L1445.60 1064.39 L1443.75 1067.04 L1438.98 1064.28 L1440.35 1061.36 L1439.25 1059.62 L1438.95 1058.93 L1435.73 1058.66 L1435.73 1053.14 L1438.95 1052.87 L1439.90 1051.04 L1440.35 1050.44 L1438.98 1047.52 L1443.75 1044.76 L1445.60 1047.41 L1447.66 1047.33 L1448.40 1047.41 L1450.25 1044.76 L1455.02 1047.52 L1453.65 1050.44 L1454.75 1052.18 Z" fill="url(#gr)" stroke="url(#gr)" stroke-width="1.6" stroke-linejoin="round"/>
      <circle cx="1447" cy="1055.9" r="6.2" fill="#fff"/><circle cx="1447" cy="1055.9" r="4.9" fill="url(#gb)"/></svg><div class="r" style="left:1443.7px;top:1072.5px;width:6px;height:3px;background:#8a8a8a;border-radius:1.5px;"></div><svg class="r" style="left:1478px;top:1043px" width="26" height="26" viewBox="1478 1043 26 26"><defs><linearGradient id="ph" x1="0" y1="0" x2="1" y2="1"><stop offset="0" stop-color="#2f7fdc"/><stop offset="1" stop-color="#7a52c6"/></linearGradient>
      <clipPath id="phc"><rect x="1479.8" y="1044.8" width="22.3" height="22" rx="3"/></clipPath></defs>
      <rect x="1479.8" y="1044.8" width="22.3" height="22" rx="3" fill="url(#ph)"/>
      <g clip-path="url(#phc)"><path d="M1479.8 1066.8 L1479.8 1063 L1490.7 1053.1 L1503 1064 V1066.8 Z" fill="#1a86dc"/>
      <path d="M1479.8 1063 L1490.7 1053.1 L1494 1056.2 L1483.6 1066.8 H1479.8 Z" fill="#5cc8f4"/></g>
      <circle cx="1495.8" cy="1049" r="1.9" fill="#e8f2ff"/></svg><div class="r" style="left:1487.8px;top:1072.5px;width:6px;height:3px;background:#8a8a8a;border-radius:1.5px;"></div><div class="r" style="left:1518px;top:1037.5px;width:36px;height:37.5px;background:#f4f4f4;border-radius:4px;box-shadow:0 0 0 1px #e6e6e6;"></div><div class="r" style="left:1516.3px;top:1037.2px;width:33.7px;height:37.8px;background:#f7f7f7;border-radius:4px;box-shadow:0 0 0 1px #e2e2e2;"></div><div class="r" style="left:1527px;top:1072.5px;width:16px;height:3px;background:#0f6cbd;border-radius:1.5px;"></div><svg class="r" style="left:1522px;top:1044px;" width="25" height="23" viewBox="0 0 25 23"><rect x="7" y="1" width="17" height="21" rx="1.5" fill="#21a366"/><rect x="15" y="1" width="9" height="7" fill="#33c481"/><rect x="7" y="8" width="17" height="7" fill="#107c41"/><rect x="7" y="15" width="17" height="7" rx="1" fill="#185c37"/>
      <rect x="1" y="5.5" width="12" height="12" rx="1.2" fill="#107c41"/><path d="M4 8.5 L10 14.5 M10 8.5 L4 14.5" stroke="#fff" stroke-width="1.8"/></svg><span class="t" style="left:1872.60px;top:1043.03px;font-size:11.5px;color:#262626;transform:scaleX(0.9757);">17:22</span><span class="t" style="left:1839.00px;top:1058.92px;font-size:11.5px;color:#262626;transform:scaleX(1.0721);">04/09/2025</span><svg class="r" style="left:1034px;top:556px;" width="17" height="17" viewBox="0 0 17 17"><path d="M5.5 1.5 H10.5 V6.5 H15.5 V11.5 H10.5 V16 H5.5 V11.5 H1.5 V6.5 H5.5 Z" fill="#000" transform="translate(0.8,0.8)"/>
      <path d="M5.5 1.5 H10.5 V6.5 H15.5 V11.5 H10.5 V16 H5.5 V11.5 H1.5 V6.5 H5.5 Z" fill="#fff" stroke="#000" stroke-width="1.4"/></svg></body></html>
